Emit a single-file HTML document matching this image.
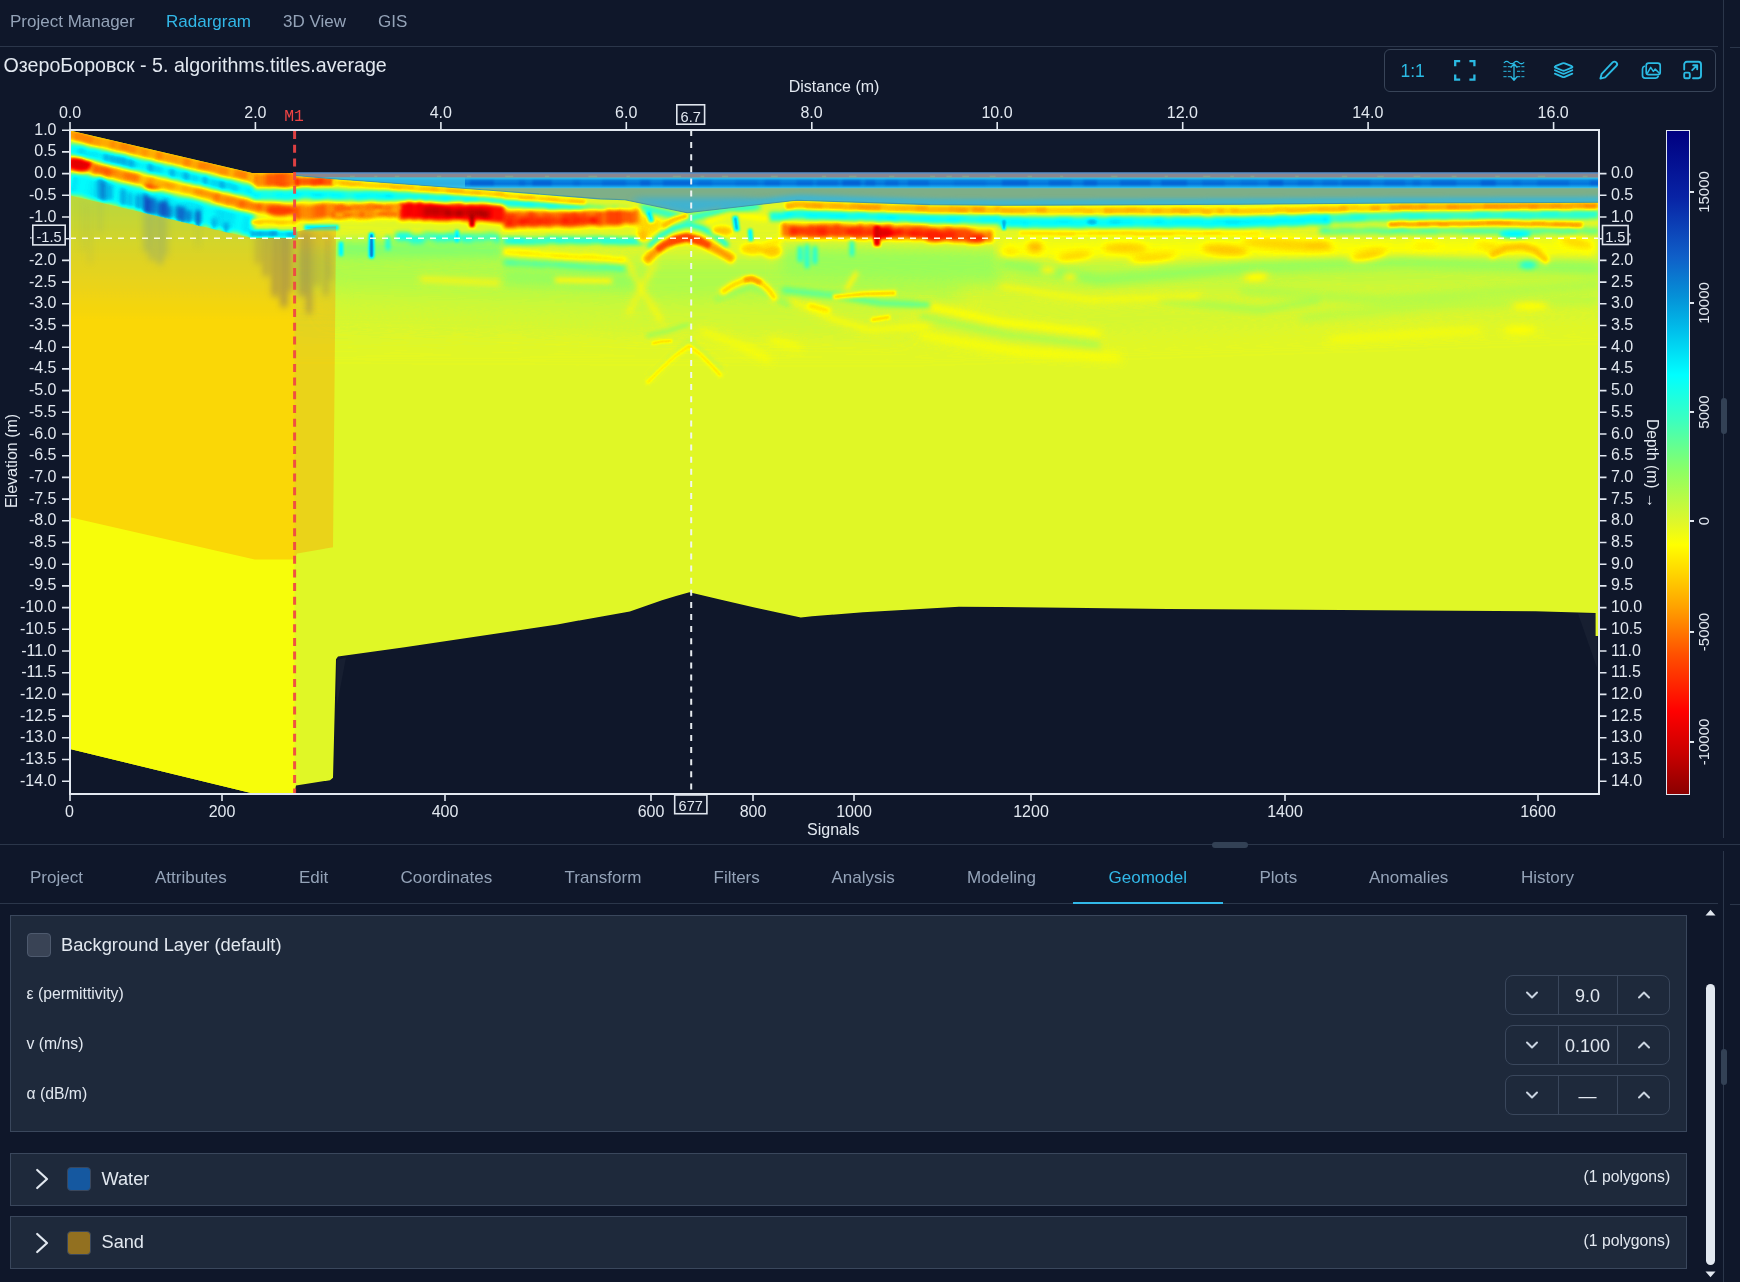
<!DOCTYPE html>
<html><head><meta charset="utf-8"><title>Radargram</title>
<style>
html,body{margin:0;padding:0;}
body{width:1740px;height:1282px;overflow:hidden;background:#0f172a;position:relative;
 font-family:"Liberation Sans",sans-serif;color:#e2e8f0;}
.a{position:absolute;white-space:nowrap;}
.t{position:absolute;white-space:nowrap;font-size:16px;line-height:16px;color:#e2e8f0;}
.nav{position:absolute;top:12px;font-size:17px;line-height:20px;color:#94a3b8;}
.tab{position:absolute;top:868px;font-size:17px;line-height:20px;color:#94a3b8;}
.hl{position:absolute;height:1px;background:#2b364a;}
.vl{position:absolute;width:1px;background:#2b364a;}
.card{position:absolute;left:10px;width:1675px;background:#1e293b;border:1px solid #3a475c;}
.lab{position:absolute;left:26.5px;font-size:15.75px;line-height:18px;color:#e2e8f0;}
.spin{position:absolute;left:1505px;width:163px;height:37.5px;border:1px solid #3a475c;border-radius:8px;}
.spin i{position:absolute;top:0;width:1px;height:37.5px;background:#3a475c;}
.spin b{position:absolute;left:52.5px;width:58px;top:9.5px;text-align:center;font-weight:normal;font-size:18px;line-height:20px;color:#e2e8f0;}
.spin svg{position:absolute;top:12px;}
.sw{position:absolute;left:67px;width:22px;height:22px;border-radius:4px;border:1px solid #3a475c;}
.poly{position:absolute;left:1583.5px;font-size:15.75px;line-height:18px;color:#e2e8f0;}
.nm{position:absolute;left:101.5px;font-size:18.2px;line-height:20px;color:#e2e8f0;}
</style></head><body><div id="w" style="position:absolute;left:0;top:0;width:1740px;height:1282px;will-change:transform">

<div class="nav" style="left:10px;">Project Manager</div>
<div class="nav" style="left:166px;color:#32b8e8;">Radargram</div>
<div class="nav" style="left:283px;">3D View</div>
<div class="nav" style="left:378px;">GIS</div>
<div class="hl" style="left:0;top:46px;width:1718px"></div>
<div class="hl" style="left:1730px;top:47px;width:10px"></div>
<div class="vl" style="left:1723px;top:0;height:838px"></div>
<div class="vl" style="left:1723px;top:851px;height:431px"></div>
<div class="a" style="left:1721px;top:397.5px;width:6.3px;height:36.5px;border-radius:3px;background:#334155"></div>
<div class="a" style="left:1721px;top:1048.7px;width:6.3px;height:36.5px;border-radius:3px;background:#334155"></div>
<div class="a" style="left:3.5px;top:53px;font-size:19.65px;line-height:24px;color:#e2e8f0">ОзероБоровск - 5. algorithms.titles.average</div>
<div class="a" style="left:1384px;top:49.3px;width:329.8px;height:41.2px;border:1px solid #384458;border-radius:6px"></div>
<div class="a" style="left:1400.5px;top:60.5px;font-size:17.5px;line-height:20px;color:#2bbbe4">1:1</div>
<svg class="a" style="left:1452.5px;top:59px" width="24" height="23" viewBox="0 0 24 23" fill="none" stroke="#2bbbe4" stroke-width="2" stroke-linecap="round" stroke-linejoin="round"><path d="M2.2 7.2V2.2H7.2 M16.4 2.2H21.4V7.2 M21.4 15.6V20.6H16.4 M7.2 20.6H2.2V15.6" stroke-width="2.3" stroke-linecap="butt" stroke-linejoin="miter"/></svg>
<svg class="a" style="left:1502px;top:58.5px" width="24" height="24" viewBox="0 0 24 24" fill="none" stroke="#2bbbe4" stroke-width="1.3" stroke-linecap="round" stroke-linejoin="round"><path d="M2.2 3.6c1.6-1.5 3.2-1.5 4.9 0s3.3 1.5 4.9 0 3.3-1.5 4.9 0 3.3 1.5 4.9 0" stroke-width="1.2"/><path d="M12 5.0V21 M9 8.2L12 4.8 15 8.2 M9 17.8L12 21.2 15 17.8" stroke-width="1.3"/><path d="M1.4 7.6H8.8 M1.4 12.4H8.8 M1.4 17.6H8.8 M15 7.6H22.4 M15 12.4H22.4 M15 17.6H22.4" stroke-width="1.1" stroke-dasharray="3.2 1.2" stroke-linecap="butt" opacity="0.8"/></svg>
<svg class="a" style="left:1552px;top:60px" width="24" height="21" viewBox="0 0 24 21" fill="none" stroke="#2bbbe4" stroke-width="1.8" stroke-linecap="round" stroke-linejoin="round"><path d="M10.4 3.3Q11.6 2.8 12.8 3.3L19.8 6.2Q21.2 6.9 19.8 7.6L12.8 10.5Q11.6 11 10.4 10.5L3.4 7.6Q2 6.9 3.4 6.2Z"/><path d="M2.9 10.2L10.4 13.5Q11.6 14 12.8 13.5L20.3 10.2"/><path d="M2.9 13.6L10.4 16.9Q11.6 17.4 12.8 16.9L20.3 13.6"/></svg>
<svg class="a" style="left:1597.5px;top:59px" width="22" height="22" viewBox="0 0 22 22" fill="none" stroke="#2bbbe4" stroke-width="1.9" stroke-linecap="round" stroke-linejoin="round"><path d="M14.6 3.4a2.55 2.55 0 0 1 3.7 3.6L7.2 18.3 2.4 19.6 3.7 14.8Z"/></svg>
<svg class="a" style="left:1639.5px;top:59.5px" width="22" height="22" viewBox="0 0 22 22" fill="none" stroke="#2bbbe4" stroke-width="1.7" stroke-linecap="round" stroke-linejoin="round"><rect x="6.2" y="3.1" width="14" height="11.6" rx="2.4"/><path d="M4.4 6.3C3.1 6.7 2.5 7.5 2.5 8.9v6.6a2.6 2.6 0 0 0 2.6 2.6h10.6c1.4 0 2.2-.6 2.5-1.8"/><path d="M7.4 13.2l3.3-5.8 2.6 4 1.9-2.3 4.2 4.2" stroke-width="1.5"/></svg>
<svg class="a" style="left:1681px;top:59px" width="22" height="22" viewBox="0 0 22 22" fill="none" stroke="#2bbbe4" stroke-width="1.9" stroke-linecap="round" stroke-linejoin="round"><path d="M3.2 10.6V5.4a2.6 2.6 0 0 1 2.6-2.6H17.4a2.6 2.6 0 0 1 2.6 2.6V16.6a2.6 2.6 0 0 1-2.6 2.6H12"/><rect x="3.2" y="13.6" width="5.6" height="5.6" rx="1.3"/><path d="M11.2 11.2L16.2 6.2 M12.2 6.2H16.2V10.2"/></svg>
<svg class="a" style="left:0;top:0" width="1740" height="840" viewBox="0 0 1740 840">
<defs>
<filter id="jet" filterUnits="userSpaceOnUse" x="60" y="120" width="1550" height="690" color-interpolation-filters="sRGB"><feComponentTransfer><feFuncR type="table" tableValues="0.545 0.592 0.639 0.686 0.733 0.780 0.819 0.858 0.898 0.937 0.976 1.000 1.000 1.000 1.000 1.000 1.000 1.000 1.000 1.000 1.000 1.000 1.000 1.000 1.000 1.000 1.000 1.000 1.000 1.000 1.000 1.000 0.998 0.955 0.911 0.867 0.817 0.768 0.718 0.668 0.618 0.569 0.520 0.471 0.423 0.374 0.325 0.277 0.229 0.189 0.149 0.109 0.069 0.029 0.000 0.000 0.000 0.000 0.000 0.000 0.002 0.007 0.012 0.016 0.022 0.029 0.037 0.045 0.052 0.058 0.055 0.051 0.048 0.044 0.040 0.037 0.033 0.030 0.026 0.022 0.018 0.015 0.011 0.007 0.004 0.000"/><feFuncG type="table" tableValues="0.000 0.000 0.000 0.000 0.000 0.000 0.000 0.000 0.000 0.000 0.000 0.016 0.060 0.103 0.147 0.190 0.233 0.277 0.322 0.374 0.426 0.478 0.531 0.583 0.635 0.683 0.729 0.775 0.821 0.867 0.912 0.957 1.000 0.989 0.978 0.969 0.974 0.979 0.984 0.989 0.993 0.998 1.000 1.000 1.000 1.000 1.000 1.000 1.000 1.000 1.000 1.000 1.000 1.000 0.988 0.944 0.899 0.855 0.811 0.767 0.724 0.683 0.641 0.600 0.559 0.521 0.482 0.444 0.405 0.368 0.337 0.306 0.276 0.245 0.214 0.183 0.153 0.129 0.113 0.097 0.081 0.065 0.048 0.032 0.016 0.000"/><feFuncB type="table" tableValues="0.000 0.000 0.000 0.000 0.000 0.000 0.000 0.000 0.000 0.000 0.000 0.000 0.000 0.000 0.000 0.000 0.000 0.000 0.000 0.000 0.000 0.000 0.000 0.000 0.000 0.000 0.000 0.000 0.000 0.000 0.000 0.000 0.002 0.059 0.116 0.170 0.205 0.239 0.274 0.309 0.344 0.378 0.425 0.480 0.534 0.589 0.644 0.698 0.751 0.795 0.838 0.882 0.925 0.969 0.996 0.983 0.969 0.955 0.942 0.928 0.912 0.894 0.875 0.857 0.840 0.829 0.817 0.806 0.794 0.782 0.764 0.746 0.728 0.710 0.692 0.674 0.656 0.639 0.621 0.604 0.587 0.570 0.553 0.536 0.519 0.502"/></feComponentTransfer></filter>
<filter id="bl1" filterUnits="userSpaceOnUse" x="40" y="100" width="1600" height="720" color-interpolation-filters="sRGB"><feGaussianBlur stdDeviation="1"/></filter>
<filter id="bl1_2" filterUnits="userSpaceOnUse" x="40" y="100" width="1600" height="720" color-interpolation-filters="sRGB"><feGaussianBlur stdDeviation="1.2"/></filter>
<filter id="bl1_3" filterUnits="userSpaceOnUse" x="40" y="100" width="1600" height="720" color-interpolation-filters="sRGB"><feGaussianBlur stdDeviation="1.3"/></filter>
<filter id="bl1_5" filterUnits="userSpaceOnUse" x="40" y="100" width="1600" height="720" color-interpolation-filters="sRGB"><feGaussianBlur stdDeviation="1.5"/></filter>
<filter id="bl1_6" filterUnits="userSpaceOnUse" x="40" y="100" width="1600" height="720" color-interpolation-filters="sRGB"><feGaussianBlur stdDeviation="1.6"/></filter>
<filter id="bl1_7" filterUnits="userSpaceOnUse" x="40" y="100" width="1600" height="720" color-interpolation-filters="sRGB"><feGaussianBlur stdDeviation="1.7"/></filter>
<filter id="bl1_8" filterUnits="userSpaceOnUse" x="40" y="100" width="1600" height="720" color-interpolation-filters="sRGB"><feGaussianBlur stdDeviation="1.8"/></filter>
<filter id="bl2" filterUnits="userSpaceOnUse" x="40" y="100" width="1600" height="720" color-interpolation-filters="sRGB"><feGaussianBlur stdDeviation="2"/></filter>
<filter id="bl2_2" filterUnits="userSpaceOnUse" x="40" y="100" width="1600" height="720" color-interpolation-filters="sRGB"><feGaussianBlur stdDeviation="2.2"/></filter>
<filter id="bl2_5" filterUnits="userSpaceOnUse" x="40" y="100" width="1600" height="720" color-interpolation-filters="sRGB"><feGaussianBlur stdDeviation="2.5"/></filter>
<filter id="bl3" filterUnits="userSpaceOnUse" x="40" y="100" width="1600" height="720" color-interpolation-filters="sRGB"><feGaussianBlur stdDeviation="3"/></filter>
<filter id="bl3_5" filterUnits="userSpaceOnUse" x="40" y="100" width="1600" height="720" color-interpolation-filters="sRGB"><feGaussianBlur stdDeviation="3.5"/></filter>
<filter id="bl4" filterUnits="userSpaceOnUse" x="40" y="100" width="1600" height="720" color-interpolation-filters="sRGB"><feGaussianBlur stdDeviation="4"/></filter>
<filter id="bl5" filterUnits="userSpaceOnUse" x="40" y="100" width="1600" height="720" color-interpolation-filters="sRGB"><feGaussianBlur stdDeviation="5"/></filter>
<filter id="bl7" filterUnits="userSpaceOnUse" x="40" y="100" width="1600" height="720" color-interpolation-filters="sRGB"><feGaussianBlur stdDeviation="7"/></filter>
<filter id="bl10" filterUnits="userSpaceOnUse" x="40" y="100" width="1600" height="720" color-interpolation-filters="sRGB"><feGaussianBlur stdDeviation="10"/></filter>
<filter id="bl12" filterUnits="userSpaceOnUse" x="40" y="100" width="1600" height="720" color-interpolation-filters="sRGB"><feGaussianBlur stdDeviation="12"/></filter>
<filter id="bl14" filterUnits="userSpaceOnUse" x="40" y="100" width="1600" height="720" color-interpolation-filters="sRGB"><feGaussianBlur stdDeviation="14"/></filter>
<clipPath id="dclip"><polygon points="70.0,130.5 252.0,173.0 1598.0,173.0 1598.0,636.0 1595.6,636.0 1595.6,613.0 1535.7,611.3 1168.0,609.0 1000.0,607.0 959.0,606.8 863.0,612.3 812.0,616.2 800.8,617.5 754.5,607.5 720.0,599.5 689.4,592.2 676.0,596.0 662.0,600.2 629.8,611.5 557.4,624.4 404.6,647.3 338.0,656.5 336.0,659.3 333.0,777.8 330.0,780.2 296.0,785.6 294.6,793.0 251.0,793.0 70.0,749.0"/></clipPath>
<clipPath id="wclip"><polygon points="296.0,173.0 1598.0,173.0 1598.0,202.3 1400.0,203.0 1240.0,204.2 1000.0,205.3 930.0,204.6 797.0,200.2 687.0,212.7 625.0,199.8 600.0,198.9 500.0,191.0 330.0,178.5 296.0,175.5"/></clipPath>
<clipPath id="sclip"><polygon points="70.0,195.5 252.0,238.0 294.6,238.0 294.6,232.0 315.0,227.8 336.0,226.0 333.0,547.2 297.0,553.4 294.7,559.6 254.8,559.6 70.0,517.2"/></clipPath>
<clipPath id="undersand"><polygon points="70,196 252,238.5 294.6,238.5 294.6,800 60,800"/></clipPath>
<linearGradient id="leftg" gradientUnits="userSpaceOnUse" x1="0" y1="205" x2="0" y2="320"><stop offset="0" stop-color="#797979"/><stop offset="0.5" stop-color="#6c6c6c"/><stop offset="1" stop-color="#626262"/></linearGradient>
<linearGradient id="wband" x1="0" y1="0" x2="0" y2="1"><stop offset="0" stop-color="#34c8ec"/><stop offset="0.28" stop-color="#0a86e0"/><stop offset="0.6" stop-color="#0472dc"/><stop offset="0.85" stop-color="#16a6ea"/><stop offset="1" stop-color="#46c8e6"/></linearGradient>
</defs>
<g filter="url(#jet)"><g clip-path="url(#dclip)">
<rect x="60" y="120" width="1550" height="690" fill="#686868"/>
<g filter="url(#bl14)"><ellipse cx="205.0" cy="640.0" rx="45.0" ry="80.0" fill="#5e5e5e" opacity="0.80"/></g>
<g filter="url(#bl12)"><polyline points="200.0,270.0 640.0,282.0 1000.0,272.0 1700.0,262.0" fill="none" stroke="#727272" stroke-width="38.0" stroke-linecap="butt" stroke-linejoin="round"/><polyline points="200.0,322.0 900.0,326.0 1700.0,300.0" fill="none" stroke="#6c6c6c" stroke-width="24.0" stroke-linecap="butt" stroke-linejoin="round"/></g>
<g filter="url(#bl10)"><polyline points="250.0,266.0 640.0,280.0 960.0,280.0" fill="none" stroke="#747474" stroke-width="36.0" stroke-linecap="butt" stroke-linejoin="round"/><polyline points="330.0,300.0 640.0,314.0 900.0,318.0" fill="none" stroke="#6d6d6d" stroke-width="22.0" stroke-linecap="butt" stroke-linejoin="round"/></g>
<g filter="url(#bl7)"><polyline points="782.0,262.0 1000.0,266.0" fill="none" stroke="#797979" stroke-width="30.0" stroke-linecap="butt" stroke-linejoin="round"/></g>
<g filter="url(#bl5)"><polyline points="1000.0,250.0 1598.0,248.0" fill="none" stroke="#616161" stroke-width="18.0" stroke-linecap="butt" stroke-linejoin="round"/><polyline points="336.0,249.0 504.0,250.0" fill="none" stroke="#7e7e7e" stroke-width="18.0" stroke-linecap="butt" stroke-linejoin="round"/><polyline points="504.0,276.0 640.0,282.0" fill="none" stroke="#7a7a7a" stroke-width="14.0" stroke-linecap="butt" stroke-linejoin="round"/></g>
<g filter="url(#bl4)"><polyline points="1000.0,262.0 1100.0,280.0 1240.0,268.0 1400.0,262.0 1598.0,268.0" fill="none" stroke="#7e7e7e" stroke-width="8.0" stroke-linecap="butt" stroke-linejoin="round"/><polyline points="1240.0,290.0 1380.0,300.0 1598.0,285.0" fill="none" stroke="#767676" stroke-width="7.0" stroke-linecap="butt" stroke-linejoin="round"/><polyline points="1300.0,318.0 1440.0,305.0 1598.0,300.0" fill="none" stroke="#747474" stroke-width="6.0" stroke-linecap="butt" stroke-linejoin="round"/></g>
<g filter="url(#bl3_5)"><polyline points="700.0,330.0 740.0,345.0 770.0,360.0" fill="none" stroke="#606060" stroke-width="5.0" stroke-linecap="butt" stroke-linejoin="round"/><polyline points="770.0,340.0 800.0,347.0" fill="none" stroke="#606060" stroke-width="5.0" stroke-linecap="butt" stroke-linejoin="round"/><polyline points="920.0,316.0 1010.0,335.0 1100.0,345.0" fill="none" stroke="#787878" stroke-width="6.0" stroke-linecap="butt" stroke-linejoin="round"/><polyline points="920.0,335.0 1020.0,352.0 1120.0,358.0" fill="none" stroke="#606060" stroke-width="6.0" stroke-linecap="butt" stroke-linejoin="round"/><polyline points="1160.0,300.0 1260.0,310.0 1320.0,300.0" fill="none" stroke="#7a7a7a" stroke-width="5.0" stroke-linecap="butt" stroke-linejoin="round"/><polyline points="1330.0,340.0 1480.0,330.0" fill="none" stroke="#616161" stroke-width="5.0" stroke-linecap="butt" stroke-linejoin="round"/></g>
<g filter="url(#bl3)"><polyline points="420.0,279.0 500.0,283.0" fill="none" stroke="#5f5f5f" stroke-width="5.0" stroke-linecap="butt" stroke-linejoin="round"/><ellipse cx="649.0" cy="225.0" rx="13.0" ry="10.0" fill="#565656"/><polyline points="626.0,258.0 640.0,287.0 662.0,322.0" fill="none" stroke="#5f5f5f" stroke-width="4.0" stroke-linecap="butt" stroke-linejoin="round"/><polyline points="656.0,262.0 640.0,290.0 628.0,315.0" fill="none" stroke="#606060" stroke-width="4.0" stroke-linecap="butt" stroke-linejoin="round"/><polyline points="790.0,300.0 830.0,318.0 870.0,330.0 930.0,326.0" fill="none" stroke="#606060" stroke-width="5.0" stroke-linecap="butt" stroke-linejoin="round"/><ellipse cx="1035.0" cy="247.0" rx="8.0" ry="5.5" fill="#4d4d4d"/><ellipse cx="1074.0" cy="256.0" rx="18.0" ry="4.5" fill="#555555" transform="rotate(-8 1074.0 256.0)"/><ellipse cx="1125.0" cy="248.0" rx="22.0" ry="5.0" fill="#535353"/><ellipse cx="1153.0" cy="257.5" rx="24.0" ry="4.5" fill="#555555" transform="rotate(-6 1153.0 257.5)"/><ellipse cx="1225.0" cy="250.0" rx="23.0" ry="5.5" fill="#515151" transform="rotate(5 1225.0 250.0)"/><ellipse cx="1010.0" cy="252.0" rx="9.0" ry="3.5" fill="#595959"/><ellipse cx="1048.0" cy="270.0" rx="8.0" ry="3.5" fill="#5d5d5d"/><ellipse cx="1070.0" cy="277.0" rx="7.0" ry="3.5" fill="#5f5f5f"/><ellipse cx="1262.0" cy="243.0" rx="15.0" ry="4.5" fill="#595959"/><ellipse cx="1287.0" cy="244.5" rx="47.0" ry="6.0" fill="#555555" transform="rotate(4 1287.0 244.5)"/><ellipse cx="1318.0" cy="245.0" rx="13.0" ry="4.5" fill="#515151"/><ellipse cx="1368.0" cy="255.0" rx="19.0" ry="5.0" fill="#535353" transform="rotate(-12 1368.0 255.0)"/><ellipse cx="1425.0" cy="245.0" rx="13.0" ry="3.5" fill="#5b5b5b"/><ellipse cx="1488.0" cy="246.0" rx="13.0" ry="3.5" fill="#575757" transform="rotate(10 1488.0 246.0)"/><ellipse cx="1576.0" cy="242.5" rx="17.0" ry="4.5" fill="#555555" transform="rotate(12 1576.0 242.5)"/><ellipse cx="1256.0" cy="277.0" rx="13.0" ry="3.5" fill="#5b5b5b" transform="rotate(-5 1256.0 277.0)"/><ellipse cx="1530.0" cy="306.0" rx="19.0" ry="3.5" fill="#5d5d5d"/><ellipse cx="1520.0" cy="330.0" rx="17.0" ry="4.0" fill="#606060"/><polyline points="1000.0,286.0 1090.0,300.0 1200.0,296.0" fill="none" stroke="#616161" stroke-width="5.0" stroke-linecap="butt" stroke-linejoin="round"/><polyline points="920.0,304.0 1000.0,322.0 1100.0,333.0" fill="none" stroke="#5f5f5f" stroke-width="6.0" stroke-linecap="butt" stroke-linejoin="round"/></g>
<g filter="url(#bl2_5)"><ellipse cx="284.0" cy="181.0" rx="9.0" ry="5.5" fill="#2a2a2a"/><ellipse cx="80.0" cy="163.5" rx="13.0" ry="9.5" fill="#181818"/><polyline points="68.4,182.7 78.3,184.7" fill="none" stroke="#a8a8a8" stroke-width="23.0" stroke-linecap="butt" stroke-linejoin="round"/><polyline points="77.1,184.1 87.6,186.3" fill="none" stroke="#a2a2a2" stroke-width="23.0" stroke-linecap="butt" stroke-linejoin="round"/><polyline points="86.4,186.8 94.1,188.3" fill="none" stroke="#a4a4a4" stroke-width="23.0" stroke-linecap="butt" stroke-linejoin="round"/><polyline points="92.9,188.4 100.8,190.0" fill="none" stroke="#aaaaaa" stroke-width="23.0" stroke-linecap="butt" stroke-linejoin="round"/><polyline points="99.6,189.2 109.1,191.2" fill="none" stroke="#a4a4a4" stroke-width="23.0" stroke-linecap="butt" stroke-linejoin="round"/><polyline points="107.9,191.4 116.3,193.1" fill="none" stroke="#a4a4a4" stroke-width="23.0" stroke-linecap="butt" stroke-linejoin="round"/><polyline points="115.1,193.2 130.1,196.5" fill="none" stroke="#a3a3a3" stroke-width="23.0" stroke-linecap="butt" stroke-linejoin="round"/><polyline points="128.9,196.2 138.6,198.2" fill="none" stroke="#a1a1a1" stroke-width="23.0" stroke-linecap="butt" stroke-linejoin="round"/><polyline points="137.4,198.4 148.4,200.7" fill="none" stroke="#a3a3a3" stroke-width="23.0" stroke-linecap="butt" stroke-linejoin="round"/><polyline points="147.2,200.4 154.4,201.8" fill="none" stroke="#a2a2a2" stroke-width="23.0" stroke-linecap="butt" stroke-linejoin="round"/><polyline points="153.2,201.5 160.8,203.0" fill="none" stroke="#a4a4a4" stroke-width="23.0" stroke-linecap="butt" stroke-linejoin="round"/><polyline points="159.6,203.6 171.4,206.1" fill="none" stroke="#a9a9a9" stroke-width="23.0" stroke-linecap="butt" stroke-linejoin="round"/><polyline points="170.2,206.5 183.2,209.2" fill="none" stroke="#a5a5a5" stroke-width="23.0" stroke-linecap="butt" stroke-linejoin="round"/><polyline points="182.0,208.4 197.1,211.6" fill="none" stroke="#a8a8a8" stroke-width="23.0" stroke-linecap="butt" stroke-linejoin="round"/><polyline points="195.9,212.4 203.4,213.9" fill="none" stroke="#aaaaaa" stroke-width="23.0" stroke-linecap="butt" stroke-linejoin="round"/><polyline points="202.2,213.9 215.3,216.7" fill="none" stroke="#a2a2a2" stroke-width="23.0" stroke-linecap="butt" stroke-linejoin="round"/><polyline points="214.1,216.7 225.3,219.0" fill="none" stroke="#a9a9a9" stroke-width="23.0" stroke-linecap="butt" stroke-linejoin="round"/><polyline points="224.1,219.1 236.0,221.6" fill="none" stroke="#a8a8a8" stroke-width="23.0" stroke-linecap="butt" stroke-linejoin="round"/><polyline points="234.8,220.6 243.8,222.4" fill="none" stroke="#a2a2a2" stroke-width="23.0" stroke-linecap="butt" stroke-linejoin="round"/><polyline points="242.6,223.4 250.7,225.0" fill="none" stroke="#a7a7a7" stroke-width="23.0" stroke-linecap="butt" stroke-linejoin="round"/><polyline points="249.5,224.8 253.6,225.2" fill="none" stroke="#a6a6a6" stroke-width="23.0" stroke-linecap="butt" stroke-linejoin="round"/><ellipse cx="350.0" cy="207.5" rx="5.0" ry="2.6" fill="#585858"/><ellipse cx="366.0" cy="215.0" rx="7.0" ry="2.6" fill="#585858"/><ellipse cx="383.0" cy="208.0" rx="4.0" ry="2.6" fill="#585858"/><ellipse cx="392.0" cy="214.0" rx="5.0" ry="2.6" fill="#585858"/><ellipse cx="340.0" cy="214.0" rx="4.0" ry="2.6" fill="#585858"/><polyline points="395.4,236.6 410.9,236.6" fill="none" stroke="#9c9c9c" stroke-width="9.0" stroke-linecap="butt" stroke-linejoin="round"/><polyline points="409.7,239.5 424.3,239.5" fill="none" stroke="#989898" stroke-width="9.0" stroke-linecap="butt" stroke-linejoin="round"/><polyline points="423.1,236.5 434.5,236.5" fill="none" stroke="#8d8d8d" stroke-width="9.0" stroke-linecap="butt" stroke-linejoin="round"/><polyline points="433.3,237.8 447.6,237.8" fill="none" stroke="#969696" stroke-width="9.0" stroke-linecap="butt" stroke-linejoin="round"/><polyline points="446.4,237.2 456.1,237.2" fill="none" stroke="#999999" stroke-width="9.0" stroke-linecap="butt" stroke-linejoin="round"/><polyline points="454.9,237.6 463.3,237.6" fill="none" stroke="#8e8e8e" stroke-width="9.0" stroke-linecap="butt" stroke-linejoin="round"/><polyline points="462.1,238.3 472.6,238.3" fill="none" stroke="#989898" stroke-width="9.0" stroke-linecap="butt" stroke-linejoin="round"/><polyline points="471.4,237.9 485.8,237.9" fill="none" stroke="#8f8f8f" stroke-width="9.0" stroke-linecap="butt" stroke-linejoin="round"/><polyline points="484.6,236.9 495.4,236.9" fill="none" stroke="#8e8e8e" stroke-width="9.0" stroke-linecap="butt" stroke-linejoin="round"/><polyline points="494.2,238.8 500.6,238.8" fill="none" stroke="#949494" stroke-width="9.0" stroke-linecap="butt" stroke-linejoin="round"/><polyline points="503.4,262.2 517.6,263.0" fill="none" stroke="#8b8b8b" stroke-width="7.0" stroke-linecap="butt" stroke-linejoin="round"/><polyline points="516.4,263.0 532.4,263.8" fill="none" stroke="#888888" stroke-width="7.0" stroke-linecap="butt" stroke-linejoin="round"/><polyline points="531.2,263.8 544.7,264.4" fill="none" stroke="#8a8a8a" stroke-width="7.0" stroke-linecap="butt" stroke-linejoin="round"/><polyline points="543.5,264.1 557.2,264.8" fill="none" stroke="#888888" stroke-width="7.0" stroke-linecap="butt" stroke-linejoin="round"/><polyline points="556.0,264.6 569.2,265.3" fill="none" stroke="#8a8a8a" stroke-width="7.0" stroke-linecap="butt" stroke-linejoin="round"/><polyline points="568.0,265.6 581.1,266.3" fill="none" stroke="#8a8a8a" stroke-width="7.0" stroke-linecap="butt" stroke-linejoin="round"/><polyline points="579.9,266.6 588.3,267.0" fill="none" stroke="#8a8a8a" stroke-width="7.0" stroke-linecap="butt" stroke-linejoin="round"/><polyline points="587.1,267.0 601.9,267.7" fill="none" stroke="#898989" stroke-width="7.0" stroke-linecap="butt" stroke-linejoin="round"/><polyline points="600.7,267.1 618.4,268.0" fill="none" stroke="#8b8b8b" stroke-width="7.0" stroke-linecap="butt" stroke-linejoin="round"/><polyline points="617.2,268.5 625.6,268.6" fill="none" stroke="#8b8b8b" stroke-width="7.0" stroke-linecap="butt" stroke-linejoin="round"/><polyline points="555.0,280.0 612.0,281.0" fill="none" stroke="#5d5d5d" stroke-width="5.0" stroke-linecap="butt" stroke-linejoin="round"/><polyline points="640.0,207.0 665.0,213.0 687.0,219.0 712.0,213.0 760.0,206.0" fill="none" stroke="#969696" stroke-width="7.0" stroke-linecap="butt" stroke-linejoin="round"/><ellipse cx="753.0" cy="249.0" rx="13.0" ry="6.0" fill="#545454"/><ellipse cx="772.0" cy="251.0" rx="10.0" ry="7.0" fill="#525252"/><polyline points="715.0,300.0 752.0,286.0 790.0,306.0" fill="none" stroke="#808080" stroke-width="4.0" stroke-linecap="butt" stroke-linejoin="round" opacity="0.80"/><polyline points="650.0,378.0 689.0,340.0 722.0,370.0" fill="none" stroke="#787878" stroke-width="3.0" stroke-linecap="butt" stroke-linejoin="round" opacity="0.70"/><polyline points="782.0,290.0 840.0,296.0 880.0,303.0 930.0,305.0" fill="none" stroke="#8a8a8a" stroke-width="6.0" stroke-linecap="butt" stroke-linejoin="round"/><polyline points="857.0,272.0 846.0,290.0" fill="none" stroke="#5c5c5c" stroke-width="4.0" stroke-linecap="butt" stroke-linejoin="round"/><polyline points="1319.4,230.7 1330.3,230.7" fill="none" stroke="#919191" stroke-width="6.0" stroke-linecap="butt" stroke-linejoin="round"/><polyline points="1329.1,231.4 1339.9,231.4" fill="none" stroke="#898989" stroke-width="6.0" stroke-linecap="butt" stroke-linejoin="round"/><polyline points="1338.7,230.8 1354.3,230.8" fill="none" stroke="#8c8c8c" stroke-width="6.0" stroke-linecap="butt" stroke-linejoin="round"/><polyline points="1353.1,231.1 1365.2,231.1" fill="none" stroke="#878787" stroke-width="6.0" stroke-linecap="butt" stroke-linejoin="round"/><polyline points="1364.0,230.6 1380.2,230.6" fill="none" stroke="#8b8b8b" stroke-width="6.0" stroke-linecap="butt" stroke-linejoin="round"/><polyline points="1379.0,231.4 1393.5,231.4" fill="none" stroke="#8d8d8d" stroke-width="6.0" stroke-linecap="butt" stroke-linejoin="round"/><polyline points="1392.3,230.6 1410.4,230.6" fill="none" stroke="#929292" stroke-width="6.0" stroke-linecap="butt" stroke-linejoin="round"/><polyline points="1409.2,231.3 1420.0,231.3" fill="none" stroke="#8b8b8b" stroke-width="6.0" stroke-linecap="butt" stroke-linejoin="round"/><polyline points="1418.8,231.1 1439.1,231.1" fill="none" stroke="#8f8f8f" stroke-width="6.0" stroke-linecap="butt" stroke-linejoin="round"/><polyline points="1437.9,230.6 1456.2,230.6" fill="none" stroke="#898989" stroke-width="6.0" stroke-linecap="butt" stroke-linejoin="round"/><polyline points="1455.0,231.1 1464.8,231.1" fill="none" stroke="#898989" stroke-width="6.0" stroke-linecap="butt" stroke-linejoin="round"/><polyline points="1463.6,230.9 1481.1,230.9" fill="none" stroke="#919191" stroke-width="6.0" stroke-linecap="butt" stroke-linejoin="round"/><polyline points="1479.9,231.1 1499.3,231.1" fill="none" stroke="#919191" stroke-width="6.0" stroke-linecap="butt" stroke-linejoin="round"/><polyline points="1498.1,231.2 1509.5,231.2" fill="none" stroke="#8a8a8a" stroke-width="6.0" stroke-linecap="butt" stroke-linejoin="round"/><polyline points="1508.3,231.3 1525.6,231.3" fill="none" stroke="#878787" stroke-width="6.0" stroke-linecap="butt" stroke-linejoin="round"/><polyline points="1524.4,231.4 1542.2,231.4" fill="none" stroke="#8f8f8f" stroke-width="6.0" stroke-linecap="butt" stroke-linejoin="round"/><polyline points="1541.0,230.6 1557.4,230.6" fill="none" stroke="#8d8d8d" stroke-width="6.0" stroke-linecap="butt" stroke-linejoin="round"/><polyline points="1556.2,231.4 1567.0,231.4" fill="none" stroke="#8e8e8e" stroke-width="6.0" stroke-linecap="butt" stroke-linejoin="round"/><polyline points="1565.8,230.9 1577.6,230.9" fill="none" stroke="#909090" stroke-width="6.0" stroke-linecap="butt" stroke-linejoin="round"/><polyline points="1576.4,230.5 1587.3,230.5" fill="none" stroke="#878787" stroke-width="6.0" stroke-linecap="butt" stroke-linejoin="round"/><polyline points="1586.1,231.1 1597.8,231.1" fill="none" stroke="#898989" stroke-width="6.0" stroke-linecap="butt" stroke-linejoin="round"/><polyline points="1596.6,230.6 1598.6,230.6" fill="none" stroke="#919191" stroke-width="6.0" stroke-linecap="butt" stroke-linejoin="round"/><ellipse cx="1528.0" cy="265.0" rx="9.0" ry="4.0" fill="#969696"/></g>
<g filter="url(#bl2_2)"><polyline points="503.4,240.6 512.8,240.6" fill="none" stroke="#989898" stroke-width="8.0" stroke-linecap="butt" stroke-linejoin="round"/><polyline points="511.6,240.7 524.9,240.7" fill="none" stroke="#9c9c9c" stroke-width="8.0" stroke-linecap="butt" stroke-linejoin="round"/><polyline points="523.7,241.2 536.0,241.2" fill="none" stroke="#959595" stroke-width="8.0" stroke-linecap="butt" stroke-linejoin="round"/><polyline points="534.8,240.9 547.0,240.9" fill="none" stroke="#939393" stroke-width="8.0" stroke-linecap="butt" stroke-linejoin="round"/><polyline points="545.8,239.8 557.6,239.8" fill="none" stroke="#959595" stroke-width="8.0" stroke-linecap="butt" stroke-linejoin="round"/><polyline points="556.4,240.4 564.9,240.4" fill="none" stroke="#979797" stroke-width="8.0" stroke-linecap="butt" stroke-linejoin="round"/><polyline points="563.7,240.1 575.5,240.1" fill="none" stroke="#959595" stroke-width="8.0" stroke-linecap="butt" stroke-linejoin="round"/><polyline points="574.3,240.5 591.7,240.5" fill="none" stroke="#959595" stroke-width="8.0" stroke-linecap="butt" stroke-linejoin="round"/><polyline points="590.5,240.0 602.7,240.0" fill="none" stroke="#949494" stroke-width="8.0" stroke-linecap="butt" stroke-linejoin="round"/><polyline points="601.5,240.7 617.7,240.7" fill="none" stroke="#989898" stroke-width="8.0" stroke-linecap="butt" stroke-linejoin="round"/><polyline points="616.5,241.2 627.0,241.2" fill="none" stroke="#969696" stroke-width="8.0" stroke-linecap="butt" stroke-linejoin="round"/><polyline points="625.8,241.0 642.1,241.0" fill="none" stroke="#989898" stroke-width="8.0" stroke-linecap="butt" stroke-linejoin="round"/><polyline points="640.9,239.9 645.6,239.9" fill="none" stroke="#9c9c9c" stroke-width="8.0" stroke-linecap="butt" stroke-linejoin="round"/><polyline points="769.4,216.8 778.5,215.9" fill="none" stroke="#9b9b9b" stroke-width="9.0" stroke-linecap="butt" stroke-linejoin="round"/><polyline points="777.3,216.8 786.2,216.0" fill="none" stroke="#9c9c9c" stroke-width="9.0" stroke-linecap="butt" stroke-linejoin="round"/><polyline points="785.0,215.0 793.9,214.1" fill="none" stroke="#a2a2a2" stroke-width="9.0" stroke-linecap="butt" stroke-linejoin="round"/><polyline points="792.7,214.3 807.0,214.2" fill="none" stroke="#9c9c9c" stroke-width="9.0" stroke-linecap="butt" stroke-linejoin="round"/><polyline points="805.8,214.9 819.9,215.3" fill="none" stroke="#a2a2a2" stroke-width="9.0" stroke-linecap="butt" stroke-linejoin="round"/><polyline points="818.7,215.1 832.0,215.5" fill="none" stroke="#a0a0a0" stroke-width="9.0" stroke-linecap="butt" stroke-linejoin="round"/><polyline points="830.8,215.8 840.8,216.1" fill="none" stroke="#a2a2a2" stroke-width="9.0" stroke-linecap="butt" stroke-linejoin="round"/><polyline points="839.6,215.8 847.6,216.0" fill="none" stroke="#a3a3a3" stroke-width="9.0" stroke-linecap="butt" stroke-linejoin="round"/><polyline points="846.4,216.1 856.9,216.4" fill="none" stroke="#9d9d9d" stroke-width="9.0" stroke-linecap="butt" stroke-linejoin="round"/><polyline points="855.7,215.7 867.8,216.1" fill="none" stroke="#9f9f9f" stroke-width="9.0" stroke-linecap="butt" stroke-linejoin="round"/><polyline points="866.6,216.7 878.3,217.0" fill="none" stroke="#9c9c9c" stroke-width="9.0" stroke-linecap="butt" stroke-linejoin="round"/><polyline points="877.1,217.0 888.0,217.3" fill="none" stroke="#a1a1a1" stroke-width="9.0" stroke-linecap="butt" stroke-linejoin="round"/><polyline points="886.8,217.5 898.0,217.8" fill="none" stroke="#a4a4a4" stroke-width="9.0" stroke-linecap="butt" stroke-linejoin="round"/><polyline points="896.8,217.3 909.6,217.7" fill="none" stroke="#9c9c9c" stroke-width="9.0" stroke-linecap="butt" stroke-linejoin="round"/><polyline points="908.4,218.2 922.4,218.7" fill="none" stroke="#9e9e9e" stroke-width="9.0" stroke-linecap="butt" stroke-linejoin="round"/><polyline points="921.2,218.7 937.6,219.0" fill="none" stroke="#a1a1a1" stroke-width="9.0" stroke-linecap="butt" stroke-linejoin="round"/><polyline points="936.4,219.1 948.0,219.2" fill="none" stroke="#9f9f9f" stroke-width="9.0" stroke-linecap="butt" stroke-linejoin="round"/><polyline points="946.8,219.2 959.9,219.3" fill="none" stroke="#a3a3a3" stroke-width="9.0" stroke-linecap="butt" stroke-linejoin="round"/><polyline points="958.7,218.7 966.5,218.7" fill="none" stroke="#9f9f9f" stroke-width="9.0" stroke-linecap="butt" stroke-linejoin="round"/><polyline points="965.3,219.3 980.3,219.5" fill="none" stroke="#9b9b9b" stroke-width="9.0" stroke-linecap="butt" stroke-linejoin="round"/><polyline points="979.1,219.5 994.0,219.6" fill="none" stroke="#a1a1a1" stroke-width="9.0" stroke-linecap="butt" stroke-linejoin="round"/><polyline points="992.8,219.5 1000.6,219.6" fill="none" stroke="#a2a2a2" stroke-width="9.0" stroke-linecap="butt" stroke-linejoin="round"/><polyline points="999.4,221.8 1009.4,221.8" fill="none" stroke="#9f9f9f" stroke-width="11.0" stroke-linecap="butt" stroke-linejoin="round"/><polyline points="1008.2,221.9 1022.2,221.9" fill="none" stroke="#a2a2a2" stroke-width="11.0" stroke-linecap="butt" stroke-linejoin="round"/><polyline points="1021.0,222.4 1029.9,222.5" fill="none" stroke="#a4a4a4" stroke-width="11.0" stroke-linecap="butt" stroke-linejoin="round"/><polyline points="1028.7,222.2 1041.4,222.2" fill="none" stroke="#a0a0a0" stroke-width="11.0" stroke-linecap="butt" stroke-linejoin="round"/><polyline points="1040.2,222.4 1057.5,222.5" fill="none" stroke="#a1a1a1" stroke-width="11.0" stroke-linecap="butt" stroke-linejoin="round"/><polyline points="1056.3,221.9 1072.5,222.0" fill="none" stroke="#a4a4a4" stroke-width="11.0" stroke-linecap="butt" stroke-linejoin="round"/><polyline points="1071.3,222.6 1084.5,222.6" fill="none" stroke="#a0a0a0" stroke-width="11.0" stroke-linecap="butt" stroke-linejoin="round"/><polyline points="1083.3,221.9 1098.6,221.9" fill="none" stroke="#a1a1a1" stroke-width="11.0" stroke-linecap="butt" stroke-linejoin="round"/><polyline points="1097.4,222.5 1110.4,222.5" fill="none" stroke="#a0a0a0" stroke-width="11.0" stroke-linecap="butt" stroke-linejoin="round"/><polyline points="1109.2,221.9 1121.1,221.9" fill="none" stroke="#a8a8a8" stroke-width="11.0" stroke-linecap="butt" stroke-linejoin="round"/><polyline points="1119.9,221.9 1133.7,221.9" fill="none" stroke="#a3a3a3" stroke-width="11.0" stroke-linecap="butt" stroke-linejoin="round"/><polyline points="1132.5,221.8 1144.7,221.9" fill="none" stroke="#9f9f9f" stroke-width="11.0" stroke-linecap="butt" stroke-linejoin="round"/><polyline points="1143.5,222.0 1155.3,222.1" fill="none" stroke="#a0a0a0" stroke-width="11.0" stroke-linecap="butt" stroke-linejoin="round"/><polyline points="1154.1,221.9 1164.8,221.9" fill="none" stroke="#a5a5a5" stroke-width="11.0" stroke-linecap="butt" stroke-linejoin="round"/><polyline points="1163.6,222.5 1173.5,222.6" fill="none" stroke="#9f9f9f" stroke-width="11.0" stroke-linecap="butt" stroke-linejoin="round"/><polyline points="1172.3,222.0 1188.7,222.0" fill="none" stroke="#a2a2a2" stroke-width="11.0" stroke-linecap="butt" stroke-linejoin="round"/><polyline points="1187.5,222.1 1203.6,222.1" fill="none" stroke="#a2a2a2" stroke-width="11.0" stroke-linecap="butt" stroke-linejoin="round"/><polyline points="1202.4,222.9 1214.4,222.9" fill="none" stroke="#a0a0a0" stroke-width="11.0" stroke-linecap="butt" stroke-linejoin="round"/><polyline points="1213.2,222.2 1226.5,222.2" fill="none" stroke="#a3a3a3" stroke-width="11.0" stroke-linecap="butt" stroke-linejoin="round"/><polyline points="1225.3,222.2 1240.5,222.3" fill="none" stroke="#a7a7a7" stroke-width="11.0" stroke-linecap="butt" stroke-linejoin="round"/><polyline points="1239.3,222.2 1251.2,221.8" fill="none" stroke="#a4a4a4" stroke-width="11.0" stroke-linecap="butt" stroke-linejoin="round"/><polyline points="1250.0,221.7 1266.8,221.1" fill="none" stroke="#a3a3a3" stroke-width="11.0" stroke-linecap="butt" stroke-linejoin="round"/><polyline points="1265.6,221.7 1276.6,221.3" fill="none" stroke="#a2a2a2" stroke-width="11.0" stroke-linecap="butt" stroke-linejoin="round"/><polyline points="1275.4,220.8 1289.2,220.3" fill="none" stroke="#a2a2a2" stroke-width="11.0" stroke-linecap="butt" stroke-linejoin="round"/><polyline points="1288.0,220.9 1298.1,220.5" fill="none" stroke="#a1a1a1" stroke-width="11.0" stroke-linecap="butt" stroke-linejoin="round"/><polyline points="1296.9,220.2 1306.4,219.9" fill="none" stroke="#a2a2a2" stroke-width="11.0" stroke-linecap="butt" stroke-linejoin="round"/><polyline points="1305.2,219.4 1316.4,219.0" fill="none" stroke="#a1a1a1" stroke-width="11.0" stroke-linecap="butt" stroke-linejoin="round"/><polyline points="1315.2,219.6 1324.8,219.3" fill="none" stroke="#a1a1a1" stroke-width="11.0" stroke-linecap="butt" stroke-linejoin="round"/><polyline points="1323.6,219.4 1330.6,219.1" fill="none" stroke="#a7a7a7" stroke-width="11.0" stroke-linecap="butt" stroke-linejoin="round"/><polyline points="1329.4,218.6 1339.1,218.3" fill="none" stroke="#919191" stroke-width="9.0" stroke-linecap="butt" stroke-linejoin="round"/><polyline points="1337.9,218.4 1352.6,217.8" fill="none" stroke="#959595" stroke-width="9.0" stroke-linecap="butt" stroke-linejoin="round"/><polyline points="1351.4,217.7 1366.6,217.1" fill="none" stroke="#999999" stroke-width="9.0" stroke-linecap="butt" stroke-linejoin="round"/><polyline points="1365.4,217.1 1379.8,216.5" fill="none" stroke="#929292" stroke-width="9.0" stroke-linecap="butt" stroke-linejoin="round"/><polyline points="1378.6,217.1 1394.0,216.5" fill="none" stroke="#919191" stroke-width="9.0" stroke-linecap="butt" stroke-linejoin="round"/><polyline points="1392.8,216.0 1402.8,215.7" fill="none" stroke="#949494" stroke-width="9.0" stroke-linecap="butt" stroke-linejoin="round"/><polyline points="1401.6,215.8 1410.4,215.7" fill="none" stroke="#979797" stroke-width="9.0" stroke-linecap="butt" stroke-linejoin="round"/><polyline points="1409.2,216.0 1425.6,215.9" fill="none" stroke="#989898" stroke-width="9.0" stroke-linecap="butt" stroke-linejoin="round"/><polyline points="1424.4,216.0 1437.0,215.9" fill="none" stroke="#949494" stroke-width="9.0" stroke-linecap="butt" stroke-linejoin="round"/><polyline points="1435.8,216.0 1452.2,215.9" fill="none" stroke="#949494" stroke-width="9.0" stroke-linecap="butt" stroke-linejoin="round"/><polyline points="1451.0,215.7 1467.6,215.6" fill="none" stroke="#919191" stroke-width="9.0" stroke-linecap="butt" stroke-linejoin="round"/><polyline points="1466.4,215.8 1475.9,215.7" fill="none" stroke="#939393" stroke-width="9.0" stroke-linecap="butt" stroke-linejoin="round"/><polyline points="1474.7,215.0 1490.3,214.9" fill="none" stroke="#989898" stroke-width="9.0" stroke-linecap="butt" stroke-linejoin="round"/><polyline points="1489.1,215.6 1504.7,215.5" fill="none" stroke="#949494" stroke-width="9.0" stroke-linecap="butt" stroke-linejoin="round"/><polyline points="1503.5,215.1 1520.9,215.0" fill="none" stroke="#9a9a9a" stroke-width="9.0" stroke-linecap="butt" stroke-linejoin="round"/><polyline points="1519.7,215.4 1535.2,215.3" fill="none" stroke="#979797" stroke-width="9.0" stroke-linecap="butt" stroke-linejoin="round"/><polyline points="1534.0,215.2 1542.9,215.1" fill="none" stroke="#959595" stroke-width="9.0" stroke-linecap="butt" stroke-linejoin="round"/><polyline points="1541.7,214.5 1559.1,214.4" fill="none" stroke="#999999" stroke-width="9.0" stroke-linecap="butt" stroke-linejoin="round"/><polyline points="1557.9,215.1 1573.0,215.0" fill="none" stroke="#949494" stroke-width="9.0" stroke-linecap="butt" stroke-linejoin="round"/><polyline points="1571.8,214.8 1589.5,214.7" fill="none" stroke="#969696" stroke-width="9.0" stroke-linecap="butt" stroke-linejoin="round"/><polyline points="1588.3,214.4 1597.3,214.4" fill="none" stroke="#959595" stroke-width="9.0" stroke-linecap="butt" stroke-linejoin="round"/><polyline points="1596.1,214.1 1598.6,214.1" fill="none" stroke="#989898" stroke-width="9.0" stroke-linecap="butt" stroke-linejoin="round"/></g>
<g filter="url(#bl2)"><polyline points="251.4,180.1 258.7,180.1" fill="none" stroke="#414141" stroke-width="15.0" stroke-linecap="butt" stroke-linejoin="round"/><polyline points="257.5,180.3 266.6,180.3" fill="none" stroke="#444444" stroke-width="15.0" stroke-linecap="butt" stroke-linejoin="round"/><polyline points="265.4,179.9 272.1,179.9" fill="none" stroke="#383838" stroke-width="15.0" stroke-linecap="butt" stroke-linejoin="round"/><polyline points="270.9,179.6 276.0,179.6" fill="none" stroke="#393939" stroke-width="15.0" stroke-linecap="butt" stroke-linejoin="round"/><polyline points="274.8,179.6 281.2,179.6" fill="none" stroke="#363636" stroke-width="15.0" stroke-linecap="butt" stroke-linejoin="round"/><polyline points="280.0,179.9 285.3,179.9" fill="none" stroke="#363636" stroke-width="15.0" stroke-linecap="butt" stroke-linejoin="round"/><polyline points="284.1,179.6 291.8,179.6" fill="none" stroke="#3a3a3a" stroke-width="15.0" stroke-linecap="butt" stroke-linejoin="round"/><polyline points="290.6,179.6 296.6,179.6" fill="none" stroke="#444444" stroke-width="15.0" stroke-linecap="butt" stroke-linejoin="round"/><polyline points="68.4,148.8 78.4,150.8" fill="none" stroke="#a1a1a1" stroke-width="12.0" stroke-linecap="butt" stroke-linejoin="round"/><polyline points="77.2,150.6 86.2,152.4" fill="none" stroke="#aaaaaa" stroke-width="12.0" stroke-linecap="butt" stroke-linejoin="round"/><polyline points="85.0,153.1 91.8,154.4" fill="none" stroke="#a6a6a6" stroke-width="12.0" stroke-linecap="butt" stroke-linejoin="round"/><polyline points="90.6,153.5 101.1,155.6" fill="none" stroke="#a6a6a6" stroke-width="12.0" stroke-linecap="butt" stroke-linejoin="round"/><polyline points="99.9,156.3 112.7,159.0" fill="none" stroke="#a3a3a3" stroke-width="12.0" stroke-linecap="butt" stroke-linejoin="round"/><polyline points="111.5,159.1 119.3,160.6" fill="none" stroke="#a6a6a6" stroke-width="12.0" stroke-linecap="butt" stroke-linejoin="round"/><polyline points="118.1,160.1 127.1,161.9" fill="none" stroke="#aaaaaa" stroke-width="12.0" stroke-linecap="butt" stroke-linejoin="round"/><polyline points="125.9,162.5 138.6,165.2" fill="none" stroke="#aaaaaa" stroke-width="12.0" stroke-linecap="butt" stroke-linejoin="round"/><polyline points="137.4,164.9 145.7,166.5" fill="none" stroke="#a4a4a4" stroke-width="12.0" stroke-linecap="butt" stroke-linejoin="round"/><polyline points="144.5,166.3 151.3,167.6" fill="none" stroke="#a3a3a3" stroke-width="12.0" stroke-linecap="butt" stroke-linejoin="round"/><polyline points="150.1,167.8 163.6,170.7" fill="none" stroke="#ababab" stroke-width="12.0" stroke-linecap="butt" stroke-linejoin="round"/><polyline points="162.4,170.6 175.8,173.4" fill="none" stroke="#a3a3a3" stroke-width="12.0" stroke-linecap="butt" stroke-linejoin="round"/><polyline points="174.6,173.3 182.6,174.9" fill="none" stroke="#a7a7a7" stroke-width="12.0" stroke-linecap="butt" stroke-linejoin="round"/><polyline points="181.4,175.1 194.1,177.8" fill="none" stroke="#a8a8a8" stroke-width="12.0" stroke-linecap="butt" stroke-linejoin="round"/><polyline points="192.9,178.0 200.1,179.4" fill="none" stroke="#ababab" stroke-width="12.0" stroke-linecap="butt" stroke-linejoin="round"/><polyline points="198.9,179.2 210.9,181.7" fill="none" stroke="#a2a2a2" stroke-width="12.0" stroke-linecap="butt" stroke-linejoin="round"/><polyline points="209.7,182.1 218.7,183.9" fill="none" stroke="#acacac" stroke-width="12.0" stroke-linecap="butt" stroke-linejoin="round"/><polyline points="217.5,184.0 227.0,186.0" fill="none" stroke="#a9a9a9" stroke-width="12.0" stroke-linecap="butt" stroke-linejoin="round"/><polyline points="225.8,185.2 233.3,186.6" fill="none" stroke="#ababab" stroke-width="12.0" stroke-linecap="butt" stroke-linejoin="round"/><polyline points="232.1,187.3 239.8,188.8" fill="none" stroke="#acacac" stroke-width="12.0" stroke-linecap="butt" stroke-linejoin="round"/><polyline points="238.6,188.5 247.7,190.4" fill="none" stroke="#a2a2a2" stroke-width="12.0" stroke-linecap="butt" stroke-linejoin="round"/><polyline points="246.5,190.5 253.6,191.6" fill="none" stroke="#a6a6a6" stroke-width="12.0" stroke-linecap="butt" stroke-linejoin="round"/><polyline points="251.4,195.4 261.1,195.4" fill="none" stroke="#a4a4a4" stroke-width="11.0" stroke-linecap="butt" stroke-linejoin="round"/><polyline points="259.9,194.8 268.3,194.8" fill="none" stroke="#9d9d9d" stroke-width="11.0" stroke-linecap="butt" stroke-linejoin="round"/><polyline points="267.1,194.9 275.6,194.9" fill="none" stroke="#9c9c9c" stroke-width="11.0" stroke-linecap="butt" stroke-linejoin="round"/><polyline points="274.4,195.0 283.6,195.0" fill="none" stroke="#a1a1a1" stroke-width="11.0" stroke-linecap="butt" stroke-linejoin="round"/><polyline points="282.4,195.4 292.0,195.4" fill="none" stroke="#a0a0a0" stroke-width="11.0" stroke-linecap="butt" stroke-linejoin="round"/><polyline points="290.8,194.5 296.6,194.5" fill="none" stroke="#9f9f9f" stroke-width="11.0" stroke-linecap="butt" stroke-linejoin="round"/><polyline points="106.0,151.9 106.0,162.9" fill="none" stroke="#bebebe" stroke-width="3.5" stroke-linecap="butt" stroke-linejoin="round"/><polyline points="112.0,153.3 112.0,164.3" fill="none" stroke="#bebebe" stroke-width="3.5" stroke-linecap="butt" stroke-linejoin="round"/><polyline points="118.0,154.7 118.0,165.7" fill="none" stroke="#bebebe" stroke-width="3.5" stroke-linecap="butt" stroke-linejoin="round"/><polyline points="124.0,156.1 124.0,167.1" fill="none" stroke="#bebebe" stroke-width="3.5" stroke-linecap="butt" stroke-linejoin="round"/><polyline points="131.0,157.7 131.0,168.7" fill="none" stroke="#bebebe" stroke-width="3.5" stroke-linecap="butt" stroke-linejoin="round"/><polyline points="150.0,162.2 150.0,173.2" fill="none" stroke="#bebebe" stroke-width="3.5" stroke-linecap="butt" stroke-linejoin="round"/><polyline points="172.0,167.3 172.0,178.3" fill="none" stroke="#bebebe" stroke-width="3.5" stroke-linecap="butt" stroke-linejoin="round"/><polyline points="186.0,170.6 186.0,181.6" fill="none" stroke="#bebebe" stroke-width="3.5" stroke-linecap="butt" stroke-linejoin="round"/><polyline points="205.0,175.0 205.0,186.0" fill="none" stroke="#bebebe" stroke-width="3.5" stroke-linecap="butt" stroke-linejoin="round"/><polyline points="222.0,179.0 222.0,190.0" fill="none" stroke="#bebebe" stroke-width="3.5" stroke-linecap="butt" stroke-linejoin="round"/><polyline points="91.4,168.1 96.8,169.1" fill="none" stroke="#393939" stroke-width="11.0" stroke-linecap="butt" stroke-linejoin="round"/><polyline points="95.6,168.7 105.1,170.6" fill="none" stroke="#3b3b3b" stroke-width="11.0" stroke-linecap="butt" stroke-linejoin="round"/><polyline points="103.9,171.0 112.4,172.7" fill="none" stroke="#383838" stroke-width="11.0" stroke-linecap="butt" stroke-linejoin="round"/><polyline points="111.2,171.9 118.0,173.2" fill="none" stroke="#424242" stroke-width="11.0" stroke-linecap="butt" stroke-linejoin="round"/><polyline points="116.8,174.0 125.3,175.7" fill="none" stroke="#454545" stroke-width="11.0" stroke-linecap="butt" stroke-linejoin="round"/><polyline points="124.1,175.3 133.0,177.1" fill="none" stroke="#3e3e3e" stroke-width="11.0" stroke-linecap="butt" stroke-linejoin="round"/><polyline points="131.8,177.1 139.7,178.7" fill="none" stroke="#3e3e3e" stroke-width="11.0" stroke-linecap="butt" stroke-linejoin="round"/><polyline points="138.5,179.2 140.6,179.4" fill="none" stroke="#454545" stroke-width="11.0" stroke-linecap="butt" stroke-linejoin="round"/><ellipse cx="154.0" cy="184.5" rx="11.0" ry="5.5" fill="#2c2c2c"/><polyline points="139.4,178.9 149.0,180.8" fill="none" stroke="#4e4e4e" stroke-width="9.0" stroke-linecap="butt" stroke-linejoin="round"/><polyline points="147.8,180.2 154.6,181.5" fill="none" stroke="#454545" stroke-width="9.0" stroke-linecap="butt" stroke-linejoin="round"/><polyline points="153.4,181.8 159.8,183.0" fill="none" stroke="#4d4d4d" stroke-width="9.0" stroke-linecap="butt" stroke-linejoin="round"/><polyline points="158.6,183.1 165.6,184.4" fill="none" stroke="#4c4c4c" stroke-width="9.0" stroke-linecap="butt" stroke-linejoin="round"/><polyline points="164.4,184.7 176.1,187.2" fill="none" stroke="#474747" stroke-width="9.0" stroke-linecap="butt" stroke-linejoin="round"/><polyline points="174.9,186.6 183.4,188.3" fill="none" stroke="#505050" stroke-width="9.0" stroke-linecap="butt" stroke-linejoin="round"/><polyline points="182.2,188.3 189.2,189.6" fill="none" stroke="#4a4a4a" stroke-width="9.0" stroke-linecap="butt" stroke-linejoin="round"/><polyline points="188.0,189.5 195.3,190.9" fill="none" stroke="#4d4d4d" stroke-width="9.0" stroke-linecap="butt" stroke-linejoin="round"/><polyline points="194.1,191.0 203.6,193.0" fill="none" stroke="#444444" stroke-width="9.0" stroke-linecap="butt" stroke-linejoin="round"/><polyline points="202.4,193.1 212.4,195.1" fill="none" stroke="#454545" stroke-width="9.0" stroke-linecap="butt" stroke-linejoin="round"/><polyline points="211.2,195.7 215.6,196.4" fill="none" stroke="#454545" stroke-width="9.0" stroke-linecap="butt" stroke-linejoin="round"/><polyline points="214.4,196.7 220.0,197.9" fill="none" stroke="#3c3c3c" stroke-width="11.0" stroke-linecap="butt" stroke-linejoin="round"/><polyline points="218.8,198.0 226.6,199.8" fill="none" stroke="#454545" stroke-width="11.0" stroke-linecap="butt" stroke-linejoin="round"/><polyline points="225.4,199.8 231.6,201.1" fill="none" stroke="#414141" stroke-width="11.0" stroke-linecap="butt" stroke-linejoin="round"/><polyline points="230.4,200.1 236.3,201.3" fill="none" stroke="#434343" stroke-width="11.0" stroke-linecap="butt" stroke-linejoin="round"/><polyline points="235.1,202.4 240.9,203.6" fill="none" stroke="#424242" stroke-width="11.0" stroke-linecap="butt" stroke-linejoin="round"/><polyline points="239.7,203.5 245.6,204.8" fill="none" stroke="#393939" stroke-width="11.0" stroke-linecap="butt" stroke-linejoin="round"/><polyline points="244.4,204.1 252.3,205.9" fill="none" stroke="#414141" stroke-width="11.0" stroke-linecap="butt" stroke-linejoin="round"/><polyline points="251.1,205.7 258.0,206.8" fill="none" stroke="#404040" stroke-width="11.0" stroke-linecap="butt" stroke-linejoin="round"/><polyline points="256.8,206.8 262.9,207.2" fill="none" stroke="#393939" stroke-width="11.0" stroke-linecap="butt" stroke-linejoin="round"/><polyline points="261.7,207.4 268.8,207.9" fill="none" stroke="#444444" stroke-width="11.0" stroke-linecap="butt" stroke-linejoin="round"/><polyline points="267.6,207.7 275.8,208.3" fill="none" stroke="#3e3e3e" stroke-width="11.0" stroke-linecap="butt" stroke-linejoin="round"/><polyline points="274.6,208.1 281.4,208.6" fill="none" stroke="#444444" stroke-width="11.0" stroke-linecap="butt" stroke-linejoin="round"/><polyline points="280.2,209.2 286.7,209.6" fill="none" stroke="#474747" stroke-width="11.0" stroke-linecap="butt" stroke-linejoin="round"/><polyline points="285.5,209.6 295.4,210.3" fill="none" stroke="#404040" stroke-width="11.0" stroke-linecap="butt" stroke-linejoin="round"/><polyline points="294.2,210.4 296.6,210.5" fill="none" stroke="#434343" stroke-width="11.0" stroke-linecap="butt" stroke-linejoin="round"/><ellipse cx="280.0" cy="211.0" rx="14.0" ry="5.5" fill="#303030"/><polyline points="100.0,177.5 100.0,199.5" fill="none" stroke="#bdbdbd" stroke-width="4.4" stroke-linecap="butt" stroke-linejoin="round"/><polyline points="104.0,180.4 104.0,201.4" fill="none" stroke="#c4c4c4" stroke-width="4.4" stroke-linecap="butt" stroke-linejoin="round"/><polyline points="110.0,183.8 110.0,199.8" fill="none" stroke="#b8b8b8" stroke-width="4.4" stroke-linecap="butt" stroke-linejoin="round"/><polyline points="123.0,188.9 123.0,205.9" fill="none" stroke="#bdbdbd" stroke-width="4.4" stroke-linecap="butt" stroke-linejoin="round"/><polyline points="130.0,192.5 130.0,207.5" fill="none" stroke="#b6b6b6" stroke-width="4.4" stroke-linecap="butt" stroke-linejoin="round"/><polyline points="138.0,194.4 138.0,209.4" fill="none" stroke="#c0c0c0" stroke-width="4.4" stroke-linecap="butt" stroke-linejoin="round"/><polyline points="145.0,194.0 145.0,213.0" fill="none" stroke="#d1d1d1" stroke-width="4.4" stroke-linecap="butt" stroke-linejoin="round"/><polyline points="149.0,196.9 149.0,214.9" fill="none" stroke="#d6d6d6" stroke-width="4.4" stroke-linecap="butt" stroke-linejoin="round"/><polyline points="154.0,198.1 154.0,216.1" fill="none" stroke="#cecece" stroke-width="4.4" stroke-linecap="butt" stroke-linejoin="round"/><polyline points="160.0,201.5 160.0,217.5" fill="none" stroke="#d4d4d4" stroke-width="4.4" stroke-linecap="butt" stroke-linejoin="round"/><polyline points="165.0,200.7 165.0,218.7" fill="none" stroke="#d8d8d8" stroke-width="4.4" stroke-linecap="butt" stroke-linejoin="round"/><polyline points="170.0,205.9 170.0,219.9" fill="none" stroke="#c7c7c7" stroke-width="4.4" stroke-linecap="butt" stroke-linejoin="round"/><polyline points="178.0,205.7 178.0,221.7" fill="none" stroke="#cecece" stroke-width="4.4" stroke-linecap="butt" stroke-linejoin="round"/><polyline points="183.0,206.9 183.0,223.9" fill="none" stroke="#d2d2d2" stroke-width="4.4" stroke-linecap="butt" stroke-linejoin="round"/><polyline points="189.0,210.3 189.0,224.3" fill="none" stroke="#cacaca" stroke-width="4.4" stroke-linecap="butt" stroke-linejoin="round"/><polyline points="198.0,210.4 198.0,228.4" fill="none" stroke="#d4d4d4" stroke-width="4.4" stroke-linecap="butt" stroke-linejoin="round"/><polyline points="214.0,218.1 214.0,230.1" fill="none" stroke="#b8b8b8" stroke-width="4.4" stroke-linecap="butt" stroke-linejoin="round"/><polyline points="226.0,222.9 226.0,234.9" fill="none" stroke="#bdbdbd" stroke-width="4.4" stroke-linecap="butt" stroke-linejoin="round"/><polyline points="294.4,194.2 301.9,194.4" fill="none" stroke="#a5a5a5" stroke-width="10.0" stroke-linecap="butt" stroke-linejoin="round"/><polyline points="300.7,193.6 312.6,193.9" fill="none" stroke="#9f9f9f" stroke-width="10.0" stroke-linecap="butt" stroke-linejoin="round"/><polyline points="311.4,194.8 325.2,195.1" fill="none" stroke="#a6a6a6" stroke-width="10.0" stroke-linecap="butt" stroke-linejoin="round"/><polyline points="324.0,194.4 332.0,194.5" fill="none" stroke="#a0a0a0" stroke-width="10.0" stroke-linecap="butt" stroke-linejoin="round"/><polyline points="330.8,195.1 345.6,195.4" fill="none" stroke="#a2a2a2" stroke-width="10.0" stroke-linecap="butt" stroke-linejoin="round"/><polyline points="344.4,195.2 355.2,195.5" fill="none" stroke="#9a9a9a" stroke-width="10.0" stroke-linecap="butt" stroke-linejoin="round"/><polyline points="354.0,195.8 363.1,196.0" fill="none" stroke="#a2a2a2" stroke-width="10.0" stroke-linecap="butt" stroke-linejoin="round"/><polyline points="361.9,195.4 370.1,195.5" fill="none" stroke="#a2a2a2" stroke-width="10.0" stroke-linecap="butt" stroke-linejoin="round"/><polyline points="368.9,195.3 377.0,195.5" fill="none" stroke="#a0a0a0" stroke-width="10.0" stroke-linecap="butt" stroke-linejoin="round"/><polyline points="375.8,195.7 386.1,195.9" fill="none" stroke="#a1a1a1" stroke-width="10.0" stroke-linecap="butt" stroke-linejoin="round"/><polyline points="384.9,196.1 394.5,196.3" fill="none" stroke="#a6a6a6" stroke-width="10.0" stroke-linecap="butt" stroke-linejoin="round"/><polyline points="393.3,196.3 407.6,196.9" fill="none" stroke="#9d9d9d" stroke-width="10.0" stroke-linecap="butt" stroke-linejoin="round"/><polyline points="406.4,197.1 421.3,198.0" fill="none" stroke="#9e9e9e" stroke-width="10.0" stroke-linecap="butt" stroke-linejoin="round"/><polyline points="420.1,198.0 431.3,198.6" fill="none" stroke="#9f9f9f" stroke-width="10.0" stroke-linecap="butt" stroke-linejoin="round"/><polyline points="430.1,198.8 442.6,199.6" fill="none" stroke="#9d9d9d" stroke-width="10.0" stroke-linecap="butt" stroke-linejoin="round"/><polyline points="441.4,199.0 451.3,199.6" fill="none" stroke="#a2a2a2" stroke-width="10.0" stroke-linecap="butt" stroke-linejoin="round"/><polyline points="450.1,199.9 463.7,200.7" fill="none" stroke="#a0a0a0" stroke-width="10.0" stroke-linecap="butt" stroke-linejoin="round"/><polyline points="462.5,200.3 477.4,201.1" fill="none" stroke="#a4a4a4" stroke-width="10.0" stroke-linecap="butt" stroke-linejoin="round"/><polyline points="476.2,201.6 485.2,202.0" fill="none" stroke="#9e9e9e" stroke-width="10.0" stroke-linecap="butt" stroke-linejoin="round"/><polyline points="484.0,201.5 495.2,202.1" fill="none" stroke="#9d9d9d" stroke-width="10.0" stroke-linecap="butt" stroke-linejoin="round"/><polyline points="494.0,202.9 504.6,203.4" fill="none" stroke="#9c9c9c" stroke-width="10.0" stroke-linecap="butt" stroke-linejoin="round"/><polyline points="294.4,212.8 300.2,212.7" fill="none" stroke="#363636" stroke-width="16.0" stroke-linecap="butt" stroke-linejoin="round"/><polyline points="299.0,211.7 304.1,211.6" fill="none" stroke="#424242" stroke-width="16.0" stroke-linecap="butt" stroke-linejoin="round"/><polyline points="302.9,212.6 311.2,212.4" fill="none" stroke="#434343" stroke-width="16.0" stroke-linecap="butt" stroke-linejoin="round"/><polyline points="310.0,212.4 315.7,212.3" fill="none" stroke="#404040" stroke-width="16.0" stroke-linecap="butt" stroke-linejoin="round"/><polyline points="314.5,211.4 322.5,211.2" fill="none" stroke="#3a3a3a" stroke-width="16.0" stroke-linecap="butt" stroke-linejoin="round"/><polyline points="321.3,210.6 326.9,210.5" fill="none" stroke="#383838" stroke-width="16.0" stroke-linecap="butt" stroke-linejoin="round"/><polyline points="325.7,210.7 335.1,210.5" fill="none" stroke="#434343" stroke-width="16.0" stroke-linecap="butt" stroke-linejoin="round"/><polyline points="333.9,211.6 340.4,211.5" fill="none" stroke="#414141" stroke-width="16.0" stroke-linecap="butt" stroke-linejoin="round"/><polyline points="339.2,211.0 344.3,210.9" fill="none" stroke="#3a3a3a" stroke-width="16.0" stroke-linecap="butt" stroke-linejoin="round"/><polyline points="343.1,210.7 345.6,210.7" fill="none" stroke="#424242" stroke-width="16.0" stroke-linecap="butt" stroke-linejoin="round"/><polyline points="344.4,211.5 351.2,211.4" fill="none" stroke="#515151" stroke-width="16.0" stroke-linecap="butt" stroke-linejoin="round"/><polyline points="350.0,209.9 354.9,209.9" fill="none" stroke="#545454" stroke-width="16.0" stroke-linecap="butt" stroke-linejoin="round"/><polyline points="353.7,211.6 362.1,211.4" fill="none" stroke="#494949" stroke-width="16.0" stroke-linecap="butt" stroke-linejoin="round"/><polyline points="360.9,210.9 370.3,210.7" fill="none" stroke="#474747" stroke-width="16.0" stroke-linecap="butt" stroke-linejoin="round"/><polyline points="369.1,210.1 375.4,210.0" fill="none" stroke="#424242" stroke-width="16.0" stroke-linecap="butt" stroke-linejoin="round"/><polyline points="374.2,210.7 383.4,210.6" fill="none" stroke="#555555" stroke-width="16.0" stroke-linecap="butt" stroke-linejoin="round"/><polyline points="382.2,210.2 388.2,210.2" fill="none" stroke="#555555" stroke-width="16.0" stroke-linecap="butt" stroke-linejoin="round"/><polyline points="387.0,209.7 393.6,209.6" fill="none" stroke="#4b4b4b" stroke-width="16.0" stroke-linecap="butt" stroke-linejoin="round"/><polyline points="392.4,209.5 401.7,209.4" fill="none" stroke="#525252" stroke-width="16.0" stroke-linecap="butt" stroke-linejoin="round"/><polyline points="400.5,210.6 402.6,210.6" fill="none" stroke="#4e4e4e" stroke-width="16.0" stroke-linecap="butt" stroke-linejoin="round"/><polyline points="399.4,210.8 407.1,211.0" fill="none" stroke="#222222" stroke-width="18.0" stroke-linecap="butt" stroke-linejoin="round"/><polyline points="405.9,209.7 413.0,209.9" fill="none" stroke="#1c1c1c" stroke-width="18.0" stroke-linecap="butt" stroke-linejoin="round"/><polyline points="411.8,210.9 417.7,211.0" fill="none" stroke="#222222" stroke-width="18.0" stroke-linecap="butt" stroke-linejoin="round"/><polyline points="416.5,209.9 422.5,210.1" fill="none" stroke="#1c1c1c" stroke-width="18.0" stroke-linecap="butt" stroke-linejoin="round"/><polyline points="421.3,211.3 428.1,211.4" fill="none" stroke="#1d1d1d" stroke-width="18.0" stroke-linecap="butt" stroke-linejoin="round"/><polyline points="426.9,210.8 432.6,210.9" fill="none" stroke="#1e1e1e" stroke-width="18.0" stroke-linecap="butt" stroke-linejoin="round"/><polyline points="431.4,211.6 437.6,211.7" fill="none" stroke="#1e1e1e" stroke-width="18.0" stroke-linecap="butt" stroke-linejoin="round"/><polyline points="436.4,211.8 443.9,212.0" fill="none" stroke="#1f1f1f" stroke-width="18.0" stroke-linecap="butt" stroke-linejoin="round"/><polyline points="442.7,212.0 450.6,212.2" fill="none" stroke="#242424" stroke-width="18.0" stroke-linecap="butt" stroke-linejoin="round"/><polyline points="449.4,211.3 457.3,211.4" fill="none" stroke="#2a2a2a" stroke-width="18.0" stroke-linecap="butt" stroke-linejoin="round"/><polyline points="456.1,211.1 463.6,211.3" fill="none" stroke="#292929" stroke-width="18.0" stroke-linecap="butt" stroke-linejoin="round"/><polyline points="462.4,212.4 468.3,212.5" fill="none" stroke="#292929" stroke-width="18.0" stroke-linecap="butt" stroke-linejoin="round"/><polyline points="467.1,211.8 472.1,211.9" fill="none" stroke="#242424" stroke-width="18.0" stroke-linecap="butt" stroke-linejoin="round"/><polyline points="470.9,211.7 475.6,211.8" fill="none" stroke="#282828" stroke-width="18.0" stroke-linecap="butt" stroke-linejoin="round"/><polyline points="474.4,212.3 478.8,212.5" fill="none" stroke="#282828" stroke-width="18.0" stroke-linecap="butt" stroke-linejoin="round"/><polyline points="477.6,211.7 485.1,212.0" fill="none" stroke="#262626" stroke-width="18.0" stroke-linecap="butt" stroke-linejoin="round"/><polyline points="483.9,212.3 490.6,212.6" fill="none" stroke="#232323" stroke-width="18.0" stroke-linecap="butt" stroke-linejoin="round"/><polyline points="489.4,213.1 495.3,213.3" fill="none" stroke="#232323" stroke-width="18.0" stroke-linecap="butt" stroke-linejoin="round"/><polyline points="494.1,213.3 498.4,213.4" fill="none" stroke="#242424" stroke-width="18.0" stroke-linecap="butt" stroke-linejoin="round"/><polyline points="497.2,213.7 504.5,213.9" fill="none" stroke="#232323" stroke-width="18.0" stroke-linecap="butt" stroke-linejoin="round"/><polyline points="503.3,212.9 504.6,212.9" fill="none" stroke="#1e1e1e" stroke-width="18.0" stroke-linecap="butt" stroke-linejoin="round"/><polyline points="424.4,211.6 429.0,211.7" fill="none" stroke="#0e0e0e" stroke-width="9.0" stroke-linecap="butt" stroke-linejoin="round"/><polyline points="427.8,211.1 434.5,211.3" fill="none" stroke="#111111" stroke-width="9.0" stroke-linecap="butt" stroke-linejoin="round"/><polyline points="433.3,211.3 439.6,211.4" fill="none" stroke="#0e0e0e" stroke-width="9.0" stroke-linecap="butt" stroke-linejoin="round"/><polyline points="438.4,211.5 446.4,211.7" fill="none" stroke="#121212" stroke-width="9.0" stroke-linecap="butt" stroke-linejoin="round"/><polyline points="445.2,212.8 452.3,213.0" fill="none" stroke="#0a0a0a" stroke-width="9.0" stroke-linecap="butt" stroke-linejoin="round"/><polyline points="451.1,213.2 457.3,213.3" fill="none" stroke="#131313" stroke-width="9.0" stroke-linecap="butt" stroke-linejoin="round"/><polyline points="456.1,213.3 463.4,213.5" fill="none" stroke="#090909" stroke-width="9.0" stroke-linecap="butt" stroke-linejoin="round"/><polyline points="462.2,212.2 469.4,212.4" fill="none" stroke="#131313" stroke-width="9.0" stroke-linecap="butt" stroke-linejoin="round"/><polyline points="468.2,212.4 475.7,212.7" fill="none" stroke="#0e0e0e" stroke-width="9.0" stroke-linecap="butt" stroke-linejoin="round"/><polyline points="474.5,212.8 479.5,213.0" fill="none" stroke="#0e0e0e" stroke-width="9.0" stroke-linecap="butt" stroke-linejoin="round"/><polyline points="478.3,212.9 482.7,213.0" fill="none" stroke="#0a0a0a" stroke-width="9.0" stroke-linecap="butt" stroke-linejoin="round"/><polyline points="481.5,214.2 488.4,214.4" fill="none" stroke="#0a0a0a" stroke-width="9.0" stroke-linecap="butt" stroke-linejoin="round"/><polyline points="487.2,213.8 490.6,213.9" fill="none" stroke="#101010" stroke-width="9.0" stroke-linecap="butt" stroke-linejoin="round"/><polyline points="388.0,236.0 388.0,250.0" fill="none" stroke="#a0a0a0" stroke-width="4.0" stroke-linecap="butt" stroke-linejoin="round"/><polyline points="503.4,202.6 516.2,203.5" fill="none" stroke="#a0a0a0" stroke-width="7.0" stroke-linecap="butt" stroke-linejoin="round"/><polyline points="515.0,203.2 526.6,204.0" fill="none" stroke="#a1a1a1" stroke-width="7.0" stroke-linecap="butt" stroke-linejoin="round"/><polyline points="525.4,204.2 534.7,204.8" fill="none" stroke="#a3a3a3" stroke-width="7.0" stroke-linecap="butt" stroke-linejoin="round"/><polyline points="533.5,204.3 547.8,205.3" fill="none" stroke="#9c9c9c" stroke-width="7.0" stroke-linecap="butt" stroke-linejoin="round"/><polyline points="546.6,206.1 559.7,207.0" fill="none" stroke="#a0a0a0" stroke-width="7.0" stroke-linecap="butt" stroke-linejoin="round"/><polyline points="558.5,206.5 572.7,207.6" fill="none" stroke="#9b9b9b" stroke-width="7.0" stroke-linecap="butt" stroke-linejoin="round"/><polyline points="571.5,207.9 583.8,208.7" fill="none" stroke="#a0a0a0" stroke-width="7.0" stroke-linecap="butt" stroke-linejoin="round"/><polyline points="582.6,208.8 593.5,209.6" fill="none" stroke="#a0a0a0" stroke-width="7.0" stroke-linecap="butt" stroke-linejoin="round"/><polyline points="592.3,209.5 603.0,210.2" fill="none" stroke="#9f9f9f" stroke-width="7.0" stroke-linecap="butt" stroke-linejoin="round"/><polyline points="601.8,210.1 610.7,210.4" fill="none" stroke="#9a9a9a" stroke-width="7.0" stroke-linecap="butt" stroke-linejoin="round"/><polyline points="609.5,209.9 617.9,210.1" fill="none" stroke="#9a9a9a" stroke-width="7.0" stroke-linecap="butt" stroke-linejoin="round"/><polyline points="616.7,210.2 626.7,210.7" fill="none" stroke="#999999" stroke-width="7.0" stroke-linecap="butt" stroke-linejoin="round"/><polyline points="625.5,211.1 638.2,213.5" fill="none" stroke="#a0a0a0" stroke-width="7.0" stroke-linecap="butt" stroke-linejoin="round"/><polyline points="637.0,213.5 640.6,214.0" fill="none" stroke="#9d9d9d" stroke-width="7.0" stroke-linecap="butt" stroke-linejoin="round"/><polyline points="503.4,220.0 510.9,220.0" fill="none" stroke="#303030" stroke-width="17.0" stroke-linecap="butt" stroke-linejoin="round"/><polyline points="509.7,220.1 517.5,220.0" fill="none" stroke="#313131" stroke-width="17.0" stroke-linecap="butt" stroke-linejoin="round"/><polyline points="516.3,218.7 521.0,218.7" fill="none" stroke="#3e3e3e" stroke-width="17.0" stroke-linecap="butt" stroke-linejoin="round"/><polyline points="519.8,219.8 526.5,219.8" fill="none" stroke="#3a3a3a" stroke-width="17.0" stroke-linecap="butt" stroke-linejoin="round"/><polyline points="525.3,218.7 529.9,218.7" fill="none" stroke="#3d3d3d" stroke-width="17.0" stroke-linecap="butt" stroke-linejoin="round"/><polyline points="528.7,219.2 534.2,219.1" fill="none" stroke="#2f2f2f" stroke-width="17.0" stroke-linecap="butt" stroke-linejoin="round"/><polyline points="533.0,219.5 538.3,219.5" fill="none" stroke="#363636" stroke-width="17.0" stroke-linecap="butt" stroke-linejoin="round"/><polyline points="537.1,219.2 545.2,219.1" fill="none" stroke="#3e3e3e" stroke-width="17.0" stroke-linecap="butt" stroke-linejoin="round"/><polyline points="544.0,219.0 548.3,219.0" fill="none" stroke="#373737" stroke-width="17.0" stroke-linecap="butt" stroke-linejoin="round"/><polyline points="547.1,219.4 552.7,219.4" fill="none" stroke="#393939" stroke-width="17.0" stroke-linecap="butt" stroke-linejoin="round"/><polyline points="551.5,218.5 559.1,218.4" fill="none" stroke="#3e3e3e" stroke-width="17.0" stroke-linecap="butt" stroke-linejoin="round"/><polyline points="557.9,218.6 562.1,218.5" fill="none" stroke="#3d3d3d" stroke-width="17.0" stroke-linecap="butt" stroke-linejoin="round"/><polyline points="560.9,218.9 565.2,218.8" fill="none" stroke="#383838" stroke-width="17.0" stroke-linecap="butt" stroke-linejoin="round"/><polyline points="564.0,218.8 568.9,218.7" fill="none" stroke="#353535" stroke-width="17.0" stroke-linecap="butt" stroke-linejoin="round"/><polyline points="567.7,219.3 572.9,219.2" fill="none" stroke="#343434" stroke-width="17.0" stroke-linecap="butt" stroke-linejoin="round"/><polyline points="571.7,218.6 578.7,218.4" fill="none" stroke="#313131" stroke-width="17.0" stroke-linecap="butt" stroke-linejoin="round"/><polyline points="577.5,218.8 582.1,218.7" fill="none" stroke="#3c3c3c" stroke-width="17.0" stroke-linecap="butt" stroke-linejoin="round"/><polyline points="580.9,218.1 587.6,217.9" fill="none" stroke="#363636" stroke-width="17.0" stroke-linecap="butt" stroke-linejoin="round"/><polyline points="586.4,217.5 594.1,217.3" fill="none" stroke="#3f3f3f" stroke-width="17.0" stroke-linecap="butt" stroke-linejoin="round"/><polyline points="592.9,217.6 598.0,217.4" fill="none" stroke="#3f3f3f" stroke-width="17.0" stroke-linecap="butt" stroke-linejoin="round"/><polyline points="596.8,218.3 602.5,218.2" fill="none" stroke="#333333" stroke-width="17.0" stroke-linecap="butt" stroke-linejoin="round"/><polyline points="601.3,218.0 607.6,217.8" fill="none" stroke="#3d3d3d" stroke-width="17.0" stroke-linecap="butt" stroke-linejoin="round"/><polyline points="606.4,217.2 612.0,217.1" fill="none" stroke="#323232" stroke-width="17.0" stroke-linecap="butt" stroke-linejoin="round"/><polyline points="610.8,217.6 617.7,217.5" fill="none" stroke="#323232" stroke-width="17.0" stroke-linecap="butt" stroke-linejoin="round"/><polyline points="616.5,217.2 622.6,217.1" fill="none" stroke="#313131" stroke-width="17.0" stroke-linecap="butt" stroke-linejoin="round"/><polyline points="621.4,216.6 629.1,216.4" fill="none" stroke="#383838" stroke-width="15.0" stroke-linecap="butt" stroke-linejoin="round"/><polyline points="627.9,217.2 635.0,217.0" fill="none" stroke="#383838" stroke-width="15.0" stroke-linecap="butt" stroke-linejoin="round"/><polyline points="633.8,216.3 638.9,216.3" fill="none" stroke="#3e3e3e" stroke-width="15.0" stroke-linecap="butt" stroke-linejoin="round"/><polyline points="637.7,216.1 640.6,216.1" fill="none" stroke="#474747" stroke-width="15.0" stroke-linecap="butt" stroke-linejoin="round"/><polyline points="507.4,222.1 512.7,222.1" fill="none" stroke="#242424" stroke-width="7.0" stroke-linecap="butt" stroke-linejoin="round"/><polyline points="511.5,221.8 521.0,221.8" fill="none" stroke="#2e2e2e" stroke-width="7.0" stroke-linecap="butt" stroke-linejoin="round"/><polyline points="519.8,221.5 525.6,221.5" fill="none" stroke="#242424" stroke-width="7.0" stroke-linecap="butt" stroke-linejoin="round"/><polyline points="524.4,220.7 531.0,220.6" fill="none" stroke="#282828" stroke-width="7.0" stroke-linecap="butt" stroke-linejoin="round"/><polyline points="529.8,221.3 537.9,221.2" fill="none" stroke="#2c2c2c" stroke-width="7.0" stroke-linecap="butt" stroke-linejoin="round"/><polyline points="536.7,221.3 542.2,221.3" fill="none" stroke="#282828" stroke-width="7.0" stroke-linecap="butt" stroke-linejoin="round"/><polyline points="541.0,221.1 550.2,221.0" fill="none" stroke="#2b2b2b" stroke-width="7.0" stroke-linecap="butt" stroke-linejoin="round"/><polyline points="549.0,220.7 555.8,220.7" fill="none" stroke="#2e2e2e" stroke-width="7.0" stroke-linecap="butt" stroke-linejoin="round"/><polyline points="554.6,221.3 563.1,221.2" fill="none" stroke="#303030" stroke-width="7.0" stroke-linecap="butt" stroke-linejoin="round"/><polyline points="561.9,220.9 569.8,220.6" fill="none" stroke="#272727" stroke-width="7.0" stroke-linecap="butt" stroke-linejoin="round"/><polyline points="568.6,220.6 573.9,220.5" fill="none" stroke="#2f2f2f" stroke-width="7.0" stroke-linecap="butt" stroke-linejoin="round"/><polyline points="572.7,220.2 580.5,220.0" fill="none" stroke="#292929" stroke-width="7.0" stroke-linecap="butt" stroke-linejoin="round"/><polyline points="579.3,220.2 587.1,220.0" fill="none" stroke="#2d2d2d" stroke-width="7.0" stroke-linecap="butt" stroke-linejoin="round"/><polyline points="585.9,220.3 591.6,220.2" fill="none" stroke="#2e2e2e" stroke-width="7.0" stroke-linecap="butt" stroke-linejoin="round"/><polyline points="590.4,220.6 597.5,220.5" fill="none" stroke="#232323" stroke-width="7.0" stroke-linecap="butt" stroke-linejoin="round"/><polyline points="596.3,220.2 600.6,220.1" fill="none" stroke="#313131" stroke-width="7.0" stroke-linecap="butt" stroke-linejoin="round"/><polyline points="503.4,251.8 520.0,252.8" fill="none" stroke="#595959" stroke-width="5.5" stroke-linecap="butt" stroke-linejoin="round"/><polyline points="518.8,252.7 531.3,253.5" fill="none" stroke="#575757" stroke-width="5.5" stroke-linecap="butt" stroke-linejoin="round"/><polyline points="530.1,253.5 541.2,254.2" fill="none" stroke="#595959" stroke-width="5.5" stroke-linecap="butt" stroke-linejoin="round"/><polyline points="540.0,254.5 552.5,255.2" fill="none" stroke="#5b5b5b" stroke-width="5.5" stroke-linecap="butt" stroke-linejoin="round"/><polyline points="551.3,255.4 568.6,256.4" fill="none" stroke="#575757" stroke-width="5.5" stroke-linecap="butt" stroke-linejoin="round"/><polyline points="567.4,256.4 584.5,257.4" fill="none" stroke="#585858" stroke-width="5.5" stroke-linecap="butt" stroke-linejoin="round"/><polyline points="583.3,256.8 597.8,257.6" fill="none" stroke="#575757" stroke-width="5.5" stroke-linecap="butt" stroke-linejoin="round"/><polyline points="596.6,257.8 611.3,258.7" fill="none" stroke="#585858" stroke-width="5.5" stroke-linecap="butt" stroke-linejoin="round"/><polyline points="610.1,259.1 620.7,259.7" fill="none" stroke="#595959" stroke-width="5.5" stroke-linecap="butt" stroke-linejoin="round"/><polyline points="619.5,259.7 625.6,259.7" fill="none" stroke="#585858" stroke-width="5.5" stroke-linecap="butt" stroke-linejoin="round"/><ellipse cx="643.0" cy="236.0" rx="6.0" ry="7.0" fill="#505050"/><polyline points="648.0,247.0 660.0,236.0 674.0,228.0 688.0,224.5 702.0,228.0 716.0,236.0 728.0,246.0" fill="none" stroke="#9e9e9e" stroke-width="5.0" stroke-linecap="butt" stroke-linejoin="round"/><polyline points="645.0,262.0 650.0,256.5 657.0,250.0 665.0,244.5 675.0,240.0 687.0,237.5 699.0,240.5 710.0,246.0 722.0,252.5 734.0,260.0" fill="none" stroke="#464646" stroke-width="9.0" stroke-linecap="butt" stroke-linejoin="round"/><polyline points="670.0,241.0 687.0,237.0 702.0,242.0" fill="none" stroke="#242424" stroke-width="6.0" stroke-linecap="butt" stroke-linejoin="round"/><ellipse cx="722.0" cy="231.0" rx="11.0" ry="5.0" fill="#505050"/><polyline points="706.0,222.0 730.0,214.0 768.0,219.0" fill="none" stroke="#5c5c5c" stroke-width="4.0" stroke-linecap="butt" stroke-linejoin="round"/><polyline points="762.0,246.0 782.0,240.0" fill="none" stroke="#585858" stroke-width="4.0" stroke-linecap="butt" stroke-linejoin="round"/><polyline points="721.0,293.0 733.0,285.0 744.0,280.5 752.0,279.0 760.0,282.0 768.0,289.0 776.0,300.0" fill="none" stroke="#525252" stroke-width="6.0" stroke-linecap="butt" stroke-linejoin="round"/><polyline points="646.0,336.0 668.0,331.0 689.0,324.0" fill="none" stroke="#7d7d7d" stroke-width="3.0" stroke-linecap="butt" stroke-linejoin="round"/><polyline points="781.4,229.8 787.0,229.8" fill="none" stroke="#3b3b3b" stroke-width="14.5" stroke-linecap="butt" stroke-linejoin="round"/><polyline points="785.8,231.0 790.8,231.1" fill="none" stroke="#424242" stroke-width="14.5" stroke-linecap="butt" stroke-linejoin="round"/><polyline points="789.6,230.9 796.2,231.0" fill="none" stroke="#393939" stroke-width="14.5" stroke-linecap="butt" stroke-linejoin="round"/><polyline points="795.0,231.1 800.2,231.2" fill="none" stroke="#3f3f3f" stroke-width="14.5" stroke-linecap="butt" stroke-linejoin="round"/><polyline points="799.0,231.3 803.6,231.3" fill="none" stroke="#3f3f3f" stroke-width="14.5" stroke-linecap="butt" stroke-linejoin="round"/><polyline points="802.4,231.5 808.9,231.5" fill="none" stroke="#414141" stroke-width="14.5" stroke-linecap="butt" stroke-linejoin="round"/><polyline points="807.7,231.0 813.8,231.1" fill="none" stroke="#343434" stroke-width="14.5" stroke-linecap="butt" stroke-linejoin="round"/><polyline points="812.6,231.3 817.5,231.3" fill="none" stroke="#383838" stroke-width="14.5" stroke-linecap="butt" stroke-linejoin="round"/><polyline points="816.3,231.0 822.1,231.0" fill="none" stroke="#343434" stroke-width="14.5" stroke-linecap="butt" stroke-linejoin="round"/><polyline points="820.9,230.8 829.1,230.9" fill="none" stroke="#333333" stroke-width="14.5" stroke-linecap="butt" stroke-linejoin="round"/><polyline points="827.9,230.5 835.3,230.6" fill="none" stroke="#3c3c3c" stroke-width="14.5" stroke-linecap="butt" stroke-linejoin="round"/><polyline points="834.1,230.3 840.4,230.4" fill="none" stroke="#323232" stroke-width="14.5" stroke-linecap="butt" stroke-linejoin="round"/><polyline points="839.2,231.2 846.8,231.3" fill="none" stroke="#3b3b3b" stroke-width="14.5" stroke-linecap="butt" stroke-linejoin="round"/><polyline points="845.6,231.2 852.9,231.3" fill="none" stroke="#424242" stroke-width="14.5" stroke-linecap="butt" stroke-linejoin="round"/><polyline points="851.7,232.2 859.2,232.3" fill="none" stroke="#363636" stroke-width="14.5" stroke-linecap="butt" stroke-linejoin="round"/><polyline points="858.0,230.9 863.0,230.9" fill="none" stroke="#333333" stroke-width="14.5" stroke-linecap="butt" stroke-linejoin="round"/><polyline points="861.8,232.2 868.2,232.3" fill="none" stroke="#393939" stroke-width="14.5" stroke-linecap="butt" stroke-linejoin="round"/><polyline points="867.0,230.8 874.9,230.9" fill="none" stroke="#3c3c3c" stroke-width="14.5" stroke-linecap="butt" stroke-linejoin="round"/><polyline points="873.7,232.5 878.4,232.5" fill="none" stroke="#363636" stroke-width="14.5" stroke-linecap="butt" stroke-linejoin="round"/><polyline points="877.2,232.5 883.9,232.6" fill="none" stroke="#3d3d3d" stroke-width="14.5" stroke-linecap="butt" stroke-linejoin="round"/><polyline points="882.7,231.2 888.7,231.2" fill="none" stroke="#424242" stroke-width="14.5" stroke-linecap="butt" stroke-linejoin="round"/><polyline points="887.5,231.0 892.6,231.1" fill="none" stroke="#363636" stroke-width="14.5" stroke-linecap="butt" stroke-linejoin="round"/><polyline points="891.4,232.6 899.2,232.7" fill="none" stroke="#404040" stroke-width="14.5" stroke-linecap="butt" stroke-linejoin="round"/><polyline points="898.0,232.4 905.4,232.6" fill="none" stroke="#3d3d3d" stroke-width="14.5" stroke-linecap="butt" stroke-linejoin="round"/><polyline points="904.2,231.6 908.6,231.8" fill="none" stroke="#3f3f3f" stroke-width="14.5" stroke-linecap="butt" stroke-linejoin="round"/><polyline points="907.4,232.0 914.3,232.3" fill="none" stroke="#3c3c3c" stroke-width="14.5" stroke-linecap="butt" stroke-linejoin="round"/><polyline points="913.1,232.4 917.7,232.5" fill="none" stroke="#363636" stroke-width="14.5" stroke-linecap="butt" stroke-linejoin="round"/><polyline points="916.5,232.3 922.6,232.5" fill="none" stroke="#353535" stroke-width="14.5" stroke-linecap="butt" stroke-linejoin="round"/><polyline points="921.4,232.2 928.4,232.5" fill="none" stroke="#3e3e3e" stroke-width="14.5" stroke-linecap="butt" stroke-linejoin="round"/><polyline points="927.2,234.2 931.5,234.3" fill="none" stroke="#353535" stroke-width="14.5" stroke-linecap="butt" stroke-linejoin="round"/><polyline points="930.3,234.2 938.0,234.6" fill="none" stroke="#343434" stroke-width="14.5" stroke-linecap="butt" stroke-linejoin="round"/><polyline points="936.8,234.6 941.4,234.8" fill="none" stroke="#404040" stroke-width="14.5" stroke-linecap="butt" stroke-linejoin="round"/><polyline points="940.2,233.7 946.2,234.0" fill="none" stroke="#404040" stroke-width="14.5" stroke-linecap="butt" stroke-linejoin="round"/><polyline points="945.0,233.6 951.7,233.9" fill="none" stroke="#353535" stroke-width="14.5" stroke-linecap="butt" stroke-linejoin="round"/><polyline points="950.5,234.6 957.5,234.9" fill="none" stroke="#343434" stroke-width="14.5" stroke-linecap="butt" stroke-linejoin="round"/><polyline points="956.3,234.7 961.6,234.9" fill="none" stroke="#343434" stroke-width="14.5" stroke-linecap="butt" stroke-linejoin="round"/><polyline points="960.4,234.8 968.0,235.1" fill="none" stroke="#343434" stroke-width="14.5" stroke-linecap="butt" stroke-linejoin="round"/><polyline points="966.8,236.1 972.2,236.3" fill="none" stroke="#333333" stroke-width="14.5" stroke-linecap="butt" stroke-linejoin="round"/><polyline points="971.0,236.3 975.5,236.5" fill="none" stroke="#3d3d3d" stroke-width="14.5" stroke-linecap="butt" stroke-linejoin="round"/><polyline points="974.3,235.4 975.6,235.4" fill="none" stroke="#363636" stroke-width="14.5" stroke-linecap="butt" stroke-linejoin="round"/><polyline points="974.4,236.5 980.1,236.8" fill="none" stroke="#494949" stroke-width="12.0" stroke-linecap="butt" stroke-linejoin="round"/><polyline points="978.9,235.6 983.4,235.8" fill="none" stroke="#474747" stroke-width="12.0" stroke-linecap="butt" stroke-linejoin="round"/><polyline points="982.2,235.8 989.4,236.1" fill="none" stroke="#494949" stroke-width="12.0" stroke-linecap="butt" stroke-linejoin="round"/><polyline points="988.2,236.2 992.6,236.2" fill="none" stroke="#3a3a3a" stroke-width="12.0" stroke-linecap="butt" stroke-linejoin="round"/><polyline points="789.4,231.1 798.2,231.2" fill="none" stroke="#272727" stroke-width="6.5" stroke-linecap="butt" stroke-linejoin="round"/><polyline points="797.0,230.7 806.2,230.8" fill="none" stroke="#2d2d2d" stroke-width="6.5" stroke-linecap="butt" stroke-linejoin="round"/><polyline points="805.0,231.7 810.6,231.8" fill="none" stroke="#2f2f2f" stroke-width="6.5" stroke-linecap="butt" stroke-linejoin="round"/><polyline points="809.4,230.7 814.6,230.7" fill="none" stroke="#2e2e2e" stroke-width="6.5" stroke-linecap="butt" stroke-linejoin="round"/><polyline points="813.4,230.9 819.5,231.0" fill="none" stroke="#2e2e2e" stroke-width="6.5" stroke-linecap="butt" stroke-linejoin="round"/><polyline points="818.3,231.6 827.0,231.7" fill="none" stroke="#272727" stroke-width="6.5" stroke-linecap="butt" stroke-linejoin="round"/><polyline points="825.8,231.4 834.1,231.5" fill="none" stroke="#303030" stroke-width="6.5" stroke-linecap="butt" stroke-linejoin="round"/><polyline points="832.9,231.4 841.6,231.5" fill="none" stroke="#313131" stroke-width="6.5" stroke-linecap="butt" stroke-linejoin="round"/><polyline points="840.4,231.0 847.6,231.1" fill="none" stroke="#333333" stroke-width="6.5" stroke-linecap="butt" stroke-linejoin="round"/><polyline points="846.4,231.5 855.4,231.6" fill="none" stroke="#272727" stroke-width="6.5" stroke-linecap="butt" stroke-linejoin="round"/><polyline points="854.2,231.4 860.8,231.5" fill="none" stroke="#2a2a2a" stroke-width="6.5" stroke-linecap="butt" stroke-linejoin="round"/><polyline points="859.6,232.0 864.4,232.1" fill="none" stroke="#2b2b2b" stroke-width="6.5" stroke-linecap="butt" stroke-linejoin="round"/><polyline points="863.2,232.4 868.6,232.4" fill="none" stroke="#313131" stroke-width="6.5" stroke-linecap="butt" stroke-linejoin="round"/><polyline points="867.4,232.4 873.7,232.5" fill="none" stroke="#2a2a2a" stroke-width="6.5" stroke-linecap="butt" stroke-linejoin="round"/><polyline points="872.5,232.8 877.6,232.8" fill="none" stroke="#333333" stroke-width="6.5" stroke-linecap="butt" stroke-linejoin="round"/><polyline points="876.4,232.3 883.7,232.3" fill="none" stroke="#2d2d2d" stroke-width="6.5" stroke-linecap="butt" stroke-linejoin="round"/><polyline points="882.5,231.8 891.9,231.9" fill="none" stroke="#272727" stroke-width="6.5" stroke-linecap="butt" stroke-linejoin="round"/><polyline points="890.7,232.9 896.7,233.0" fill="none" stroke="#242424" stroke-width="6.5" stroke-linecap="butt" stroke-linejoin="round"/><polyline points="895.5,232.0 903.7,232.2" fill="none" stroke="#242424" stroke-width="6.5" stroke-linecap="butt" stroke-linejoin="round"/><polyline points="902.5,232.7 910.0,233.0" fill="none" stroke="#2f2f2f" stroke-width="6.5" stroke-linecap="butt" stroke-linejoin="round"/><polyline points="908.8,233.3 917.8,233.7" fill="none" stroke="#252525" stroke-width="6.5" stroke-linecap="butt" stroke-linejoin="round"/><polyline points="916.6,233.4 923.8,233.7" fill="none" stroke="#282828" stroke-width="6.5" stroke-linecap="butt" stroke-linejoin="round"/><polyline points="922.6,233.1 929.3,233.4" fill="none" stroke="#2d2d2d" stroke-width="6.5" stroke-linecap="butt" stroke-linejoin="round"/><polyline points="928.1,234.1 933.6,234.3" fill="none" stroke="#303030" stroke-width="6.5" stroke-linecap="butt" stroke-linejoin="round"/><polyline points="932.4,234.9 941.2,235.2" fill="none" stroke="#2a2a2a" stroke-width="6.5" stroke-linecap="butt" stroke-linejoin="round"/><polyline points="940.0,234.6 948.8,235.0" fill="none" stroke="#2a2a2a" stroke-width="6.5" stroke-linecap="butt" stroke-linejoin="round"/><polyline points="947.6,234.7 956.1,235.0" fill="none" stroke="#282828" stroke-width="6.5" stroke-linecap="butt" stroke-linejoin="round"/><polyline points="954.9,236.0 960.6,236.3" fill="none" stroke="#313131" stroke-width="6.5" stroke-linecap="butt" stroke-linejoin="round"/><ellipse cx="884.0" cy="233.0" rx="9.0" ry="6.0" fill="#181818"/><ellipse cx="935.0" cy="236.0" rx="12.0" ry="6.0" fill="#282828"/><ellipse cx="978.0" cy="238.5" rx="8.0" ry="5.0" fill="#2a2a2a"/><polyline points="800.0,246.0 800.0,262.0" fill="none" stroke="#9e9e9e" stroke-width="4.0" stroke-linecap="butt" stroke-linejoin="round"/><polyline points="807.0,244.0 807.0,268.0" fill="none" stroke="#9e9e9e" stroke-width="4.0" stroke-linecap="butt" stroke-linejoin="round"/><polyline points="815.0,246.0 815.0,264.0" fill="none" stroke="#9e9e9e" stroke-width="4.0" stroke-linecap="butt" stroke-linejoin="round"/><polyline points="852.0,240.0 852.0,256.0" fill="none" stroke="#9e9e9e" stroke-width="4.0" stroke-linecap="butt" stroke-linejoin="round"/><polyline points="808.0,305.0 830.0,311.0" fill="none" stroke="#565656" stroke-width="5.0" stroke-linecap="butt" stroke-linejoin="round"/><ellipse cx="1515.0" cy="234.0" rx="16.0" ry="4.0" fill="#a5a5a5"/><polyline points="1490.0,256.0 1505.0,248.0 1522.0,246.5 1535.0,250.0 1548.0,262.0" fill="none" stroke="#505050" stroke-width="7.0" stroke-linecap="butt" stroke-linejoin="round"/></g>
<g filter="url(#bl1_8)"><polyline points="249.4,233.8 259.0,233.8" fill="none" stroke="#b3b3b3" stroke-width="8.0" stroke-linecap="butt" stroke-linejoin="round"/><polyline points="257.8,233.8 263.5,233.8" fill="none" stroke="#b5b5b5" stroke-width="8.0" stroke-linecap="butt" stroke-linejoin="round"/><polyline points="262.3,233.8 271.5,233.8" fill="none" stroke="#b2b2b2" stroke-width="8.0" stroke-linecap="butt" stroke-linejoin="round"/><polyline points="270.3,233.6 278.3,233.6" fill="none" stroke="#bababa" stroke-width="8.0" stroke-linecap="butt" stroke-linejoin="round"/><polyline points="277.1,234.4 288.0,234.4" fill="none" stroke="#a8a8a8" stroke-width="8.0" stroke-linecap="butt" stroke-linejoin="round"/><polyline points="286.8,234.5 296.6,234.5" fill="none" stroke="#b1b1b1" stroke-width="8.0" stroke-linecap="butt" stroke-linejoin="round"/><polyline points="294.4,181.9 300.2,181.9" fill="none" stroke="#2d2d2d" stroke-width="8.5" stroke-linecap="butt" stroke-linejoin="round"/><polyline points="299.0,181.5 304.5,181.5" fill="none" stroke="#393939" stroke-width="8.5" stroke-linecap="butt" stroke-linejoin="round"/><polyline points="303.3,181.5 312.0,181.5" fill="none" stroke="#383838" stroke-width="8.5" stroke-linecap="butt" stroke-linejoin="round"/><polyline points="310.8,181.9 316.7,181.9" fill="none" stroke="#323232" stroke-width="8.5" stroke-linecap="butt" stroke-linejoin="round"/><polyline points="315.5,181.5 320.4,181.5" fill="none" stroke="#313131" stroke-width="8.5" stroke-linecap="butt" stroke-linejoin="round"/><polyline points="319.2,181.3 324.6,181.3" fill="none" stroke="#2f2f2f" stroke-width="8.5" stroke-linecap="butt" stroke-linejoin="round"/><polyline points="323.4,181.8 328.2,181.8" fill="none" stroke="#373737" stroke-width="8.5" stroke-linecap="butt" stroke-linejoin="round"/><polyline points="327.0,181.7 333.6,181.7" fill="none" stroke="#383838" stroke-width="8.5" stroke-linecap="butt" stroke-linejoin="round"/><polyline points="371.5,233.0 371.5,258.0" fill="none" stroke="#d2d2d2" stroke-width="4.2" stroke-linecap="butt" stroke-linejoin="round"/><polyline points="662.0,226.5 674.0,219.5 688.0,215.5" fill="none" stroke="#505050" stroke-width="6.0" stroke-linecap="butt" stroke-linejoin="round"/><polyline points="657.0,250.0 665.0,244.5 675.0,240.0 687.0,237.5 699.0,240.5 710.0,246.0" fill="none" stroke="#343434" stroke-width="6.0" stroke-linecap="butt" stroke-linejoin="round"/><polyline points="744.0,280.0 752.0,278.5 761.0,283.0" fill="none" stroke="#464646" stroke-width="5.0" stroke-linecap="butt" stroke-linejoin="round"/><polyline points="877.0,226.0 877.0,246.0" fill="none" stroke="#141414" stroke-width="6.0" stroke-linecap="butt" stroke-linejoin="round"/><polyline points="833.0,297.0 865.0,294.0 896.0,293.0" fill="none" stroke="#545454" stroke-width="5.0" stroke-linecap="butt" stroke-linejoin="round"/><polyline points="871.0,320.0 890.0,317.0" fill="none" stroke="#545454" stroke-width="4.0" stroke-linecap="butt" stroke-linejoin="round"/><polyline points="999.4,210.3 1013.1,210.4" fill="none" stroke="#4c4c4c" stroke-width="6.5" stroke-linecap="butt" stroke-linejoin="round"/><polyline points="1011.9,210.5 1026.8,210.5" fill="none" stroke="#4d4d4d" stroke-width="6.5" stroke-linecap="butt" stroke-linejoin="round"/><polyline points="1025.6,210.0 1037.8,210.0" fill="none" stroke="#505050" stroke-width="6.5" stroke-linecap="butt" stroke-linejoin="round"/><polyline points="1036.6,210.2 1047.3,210.2" fill="none" stroke="#4b4b4b" stroke-width="6.5" stroke-linecap="butt" stroke-linejoin="round"/><polyline points="1046.1,210.5 1061.1,210.5" fill="none" stroke="#545454" stroke-width="6.5" stroke-linecap="butt" stroke-linejoin="round"/><polyline points="1059.9,210.6 1073.5,210.7" fill="none" stroke="#545454" stroke-width="6.5" stroke-linecap="butt" stroke-linejoin="round"/><polyline points="1072.3,210.1 1084.7,210.1" fill="none" stroke="#525252" stroke-width="6.5" stroke-linecap="butt" stroke-linejoin="round"/><polyline points="1083.5,210.8 1095.0,210.8" fill="none" stroke="#515151" stroke-width="6.5" stroke-linecap="butt" stroke-linejoin="round"/><polyline points="1093.8,210.3 1105.2,210.4" fill="none" stroke="#555555" stroke-width="6.5" stroke-linecap="butt" stroke-linejoin="round"/><polyline points="1104.0,210.6 1113.6,210.6" fill="none" stroke="#4c4c4c" stroke-width="6.5" stroke-linecap="butt" stroke-linejoin="round"/><polyline points="1112.4,210.5 1127.3,210.5" fill="none" stroke="#4e4e4e" stroke-width="6.5" stroke-linecap="butt" stroke-linejoin="round"/><polyline points="1126.1,210.2 1137.5,210.2" fill="none" stroke="#4c4c4c" stroke-width="6.5" stroke-linecap="butt" stroke-linejoin="round"/><polyline points="1136.3,210.5 1145.9,210.5" fill="none" stroke="#4e4e4e" stroke-width="6.5" stroke-linecap="butt" stroke-linejoin="round"/><polyline points="1144.7,210.7 1152.6,210.7" fill="none" stroke="#535353" stroke-width="6.5" stroke-linecap="butt" stroke-linejoin="round"/><polyline points="1151.4,210.8 1163.1,210.8" fill="none" stroke="#4d4d4d" stroke-width="6.5" stroke-linecap="butt" stroke-linejoin="round"/><polyline points="1161.9,210.7 1172.8,210.8" fill="none" stroke="#515151" stroke-width="6.5" stroke-linecap="butt" stroke-linejoin="round"/><polyline points="1171.6,210.5 1181.3,210.5" fill="none" stroke="#4d4d4d" stroke-width="6.5" stroke-linecap="butt" stroke-linejoin="round"/><polyline points="1180.1,210.8 1190.4,210.9" fill="none" stroke="#4b4b4b" stroke-width="6.5" stroke-linecap="butt" stroke-linejoin="round"/><polyline points="1189.2,210.5 1203.3,210.6" fill="none" stroke="#515151" stroke-width="6.5" stroke-linecap="butt" stroke-linejoin="round"/><polyline points="1202.1,211.3 1211.6,211.4" fill="none" stroke="#4e4e4e" stroke-width="6.5" stroke-linecap="butt" stroke-linejoin="round"/><polyline points="1210.4,210.4 1218.8,210.5" fill="none" stroke="#545454" stroke-width="6.5" stroke-linecap="butt" stroke-linejoin="round"/><polyline points="1217.6,210.8 1225.3,210.8" fill="none" stroke="#4f4f4f" stroke-width="6.5" stroke-linecap="butt" stroke-linejoin="round"/><polyline points="1224.1,210.7 1232.2,210.7" fill="none" stroke="#555555" stroke-width="6.5" stroke-linecap="butt" stroke-linejoin="round"/><polyline points="1231.0,210.8 1239.4,210.8" fill="none" stroke="#4f4f4f" stroke-width="6.5" stroke-linecap="butt" stroke-linejoin="round"/><polyline points="1238.2,211.3 1250.4,211.1" fill="none" stroke="#535353" stroke-width="6.5" stroke-linecap="butt" stroke-linejoin="round"/><polyline points="1249.2,211.0 1262.3,210.7" fill="none" stroke="#535353" stroke-width="6.5" stroke-linecap="butt" stroke-linejoin="round"/><polyline points="1261.1,210.7 1274.6,210.4" fill="none" stroke="#545454" stroke-width="6.5" stroke-linecap="butt" stroke-linejoin="round"/><polyline points="1273.4,209.7 1287.5,209.4" fill="none" stroke="#535353" stroke-width="6.5" stroke-linecap="butt" stroke-linejoin="round"/><polyline points="1286.3,210.3 1297.5,210.1" fill="none" stroke="#515151" stroke-width="6.5" stroke-linecap="butt" stroke-linejoin="round"/><polyline points="1296.3,210.0 1309.8,209.7" fill="none" stroke="#515151" stroke-width="6.5" stroke-linecap="butt" stroke-linejoin="round"/><polyline points="1308.6,209.3 1319.4,209.1" fill="none" stroke="#525252" stroke-width="6.5" stroke-linecap="butt" stroke-linejoin="round"/><polyline points="1318.2,209.2 1328.5,209.0" fill="none" stroke="#4f4f4f" stroke-width="6.5" stroke-linecap="butt" stroke-linejoin="round"/><polyline points="1327.3,209.3 1340.8,209.0" fill="none" stroke="#505050" stroke-width="6.5" stroke-linecap="butt" stroke-linejoin="round"/><polyline points="1339.6,208.4 1348.3,208.2" fill="none" stroke="#4c4c4c" stroke-width="6.5" stroke-linecap="butt" stroke-linejoin="round"/><polyline points="1347.1,208.0 1358.9,207.8" fill="none" stroke="#545454" stroke-width="6.5" stroke-linecap="butt" stroke-linejoin="round"/><polyline points="1357.7,208.5 1371.7,208.2" fill="none" stroke="#555555" stroke-width="6.5" stroke-linecap="butt" stroke-linejoin="round"/><polyline points="1370.5,208.3 1381.1,208.1" fill="none" stroke="#4b4b4b" stroke-width="6.5" stroke-linecap="butt" stroke-linejoin="round"/><polyline points="1379.9,207.7 1390.6,207.4" fill="none" stroke="#545454" stroke-width="6.5" stroke-linecap="butt" stroke-linejoin="round"/></g>
<g filter="url(#bl1_7)"><polyline points="785.4,206.4 794.4,205.6" fill="none" stroke="#4c4c4c" stroke-width="7.0" stroke-linecap="butt" stroke-linejoin="round"/><polyline points="793.2,204.8 806.2,204.7" fill="none" stroke="#4e4e4e" stroke-width="7.0" stroke-linecap="butt" stroke-linejoin="round"/><polyline points="805.0,205.4 814.1,205.6" fill="none" stroke="#4b4b4b" stroke-width="7.0" stroke-linecap="butt" stroke-linejoin="round"/><polyline points="812.9,205.6 823.3,205.9" fill="none" stroke="#494949" stroke-width="7.0" stroke-linecap="butt" stroke-linejoin="round"/><polyline points="822.1,205.7 831.7,206.0" fill="none" stroke="#4f4f4f" stroke-width="7.0" stroke-linecap="butt" stroke-linejoin="round"/><polyline points="830.5,205.9 843.1,206.2" fill="none" stroke="#4c4c4c" stroke-width="7.0" stroke-linecap="butt" stroke-linejoin="round"/><polyline points="841.9,206.7 852.1,207.0" fill="none" stroke="#4e4e4e" stroke-width="7.0" stroke-linecap="butt" stroke-linejoin="round"/><polyline points="850.9,206.5 859.9,206.7" fill="none" stroke="#4a4a4a" stroke-width="7.0" stroke-linecap="butt" stroke-linejoin="round"/><polyline points="858.7,207.1 869.9,207.4" fill="none" stroke="#474747" stroke-width="7.0" stroke-linecap="butt" stroke-linejoin="round"/><polyline points="868.7,207.2 881.6,207.6" fill="none" stroke="#474747" stroke-width="7.0" stroke-linecap="butt" stroke-linejoin="round"/><polyline points="880.4,207.3 887.1,207.5" fill="none" stroke="#505050" stroke-width="7.0" stroke-linecap="butt" stroke-linejoin="round"/><polyline points="885.9,208.0 897.2,208.3" fill="none" stroke="#505050" stroke-width="7.0" stroke-linecap="butt" stroke-linejoin="round"/><polyline points="896.0,208.2 907.1,208.5" fill="none" stroke="#4e4e4e" stroke-width="7.0" stroke-linecap="butt" stroke-linejoin="round"/><polyline points="905.9,208.2 917.4,208.5" fill="none" stroke="#4e4e4e" stroke-width="7.0" stroke-linecap="butt" stroke-linejoin="round"/><polyline points="916.2,208.4 928.3,208.8" fill="none" stroke="#494949" stroke-width="7.0" stroke-linecap="butt" stroke-linejoin="round"/><polyline points="927.1,209.5 939.2,209.6" fill="none" stroke="#4e4e4e" stroke-width="7.0" stroke-linecap="butt" stroke-linejoin="round"/><polyline points="938.0,209.5 950.6,209.6" fill="none" stroke="#4d4d4d" stroke-width="7.0" stroke-linecap="butt" stroke-linejoin="round"/><polyline points="949.4,209.3 958.1,209.4" fill="none" stroke="#4a4a4a" stroke-width="7.0" stroke-linecap="butt" stroke-linejoin="round"/><polyline points="956.9,209.8 968.2,209.9" fill="none" stroke="#484848" stroke-width="7.0" stroke-linecap="butt" stroke-linejoin="round"/><polyline points="967.0,209.3 973.8,209.3" fill="none" stroke="#4f4f4f" stroke-width="7.0" stroke-linecap="butt" stroke-linejoin="round"/><polyline points="972.6,209.6 985.8,209.7" fill="none" stroke="#474747" stroke-width="7.0" stroke-linecap="butt" stroke-linejoin="round"/><polyline points="984.6,210.1 995.5,210.2" fill="none" stroke="#515151" stroke-width="7.0" stroke-linecap="butt" stroke-linejoin="round"/><polyline points="994.3,209.5 1000.6,209.6" fill="none" stroke="#4d4d4d" stroke-width="7.0" stroke-linecap="butt" stroke-linejoin="round"/></g>
<g filter="url(#bl1_6)"><polyline points="332.4,182.2 341.7,182.8" fill="none" stroke="#555555" stroke-width="5.5" stroke-linecap="butt" stroke-linejoin="round"/><polyline points="340.5,182.9 349.7,183.4" fill="none" stroke="#4e4e4e" stroke-width="5.5" stroke-linecap="butt" stroke-linejoin="round"/><polyline points="348.5,183.8 355.8,184.2" fill="none" stroke="#4e4e4e" stroke-width="5.5" stroke-linecap="butt" stroke-linejoin="round"/><polyline points="354.6,183.8 363.0,184.3" fill="none" stroke="#505050" stroke-width="5.5" stroke-linecap="butt" stroke-linejoin="round"/><polyline points="361.8,184.8 371.1,185.4" fill="none" stroke="#545454" stroke-width="5.5" stroke-linecap="butt" stroke-linejoin="round"/><polyline points="369.9,185.4 381.0,186.1" fill="none" stroke="#545454" stroke-width="5.5" stroke-linecap="butt" stroke-linejoin="round"/><polyline points="379.8,185.4 391.6,186.2" fill="none" stroke="#525252" stroke-width="5.5" stroke-linecap="butt" stroke-linejoin="round"/><polyline points="390.4,186.7 402.4,187.5" fill="none" stroke="#4e4e4e" stroke-width="5.5" stroke-linecap="butt" stroke-linejoin="round"/><polyline points="401.2,187.1 414.5,188.0" fill="none" stroke="#505050" stroke-width="5.5" stroke-linecap="butt" stroke-linejoin="round"/><polyline points="413.3,188.5 422.1,189.0" fill="none" stroke="#555555" stroke-width="5.5" stroke-linecap="butt" stroke-linejoin="round"/><polyline points="420.9,188.7 432.2,189.4" fill="none" stroke="#515151" stroke-width="5.5" stroke-linecap="butt" stroke-linejoin="round"/><polyline points="431.0,189.3 438.8,189.8" fill="none" stroke="#4d4d4d" stroke-width="5.5" stroke-linecap="butt" stroke-linejoin="round"/><polyline points="437.6,189.8 447.8,190.5" fill="none" stroke="#545454" stroke-width="5.5" stroke-linecap="butt" stroke-linejoin="round"/><polyline points="446.6,190.4 456.4,191.1" fill="none" stroke="#4d4d4d" stroke-width="5.5" stroke-linecap="butt" stroke-linejoin="round"/><polyline points="455.2,191.0 464.3,191.6" fill="none" stroke="#4d4d4d" stroke-width="5.5" stroke-linecap="butt" stroke-linejoin="round"/><polyline points="463.1,192.2 473.8,192.9" fill="none" stroke="#525252" stroke-width="5.5" stroke-linecap="butt" stroke-linejoin="round"/><polyline points="472.6,192.6 482.1,193.3" fill="none" stroke="#4f4f4f" stroke-width="5.5" stroke-linecap="butt" stroke-linejoin="round"/><polyline points="480.9,193.1 488.0,193.5" fill="none" stroke="#555555" stroke-width="5.5" stroke-linecap="butt" stroke-linejoin="round"/><polyline points="486.8,193.8 497.0,194.4" fill="none" stroke="#545454" stroke-width="5.5" stroke-linecap="butt" stroke-linejoin="round"/><polyline points="495.8,194.1 504.4,194.7" fill="none" stroke="#4f4f4f" stroke-width="5.5" stroke-linecap="butt" stroke-linejoin="round"/><polyline points="503.2,195.2 504.6,195.2" fill="none" stroke="#545454" stroke-width="5.5" stroke-linecap="butt" stroke-linejoin="round"/><polyline points="341.0,242.0 341.0,256.0" fill="none" stroke="#aaaaaa" stroke-width="4.0" stroke-linecap="butt" stroke-linejoin="round"/><polyline points="503.4,195.9 510.1,196.3" fill="none" stroke="#525252" stroke-width="5.0" stroke-linecap="butt" stroke-linejoin="round"/><polyline points="508.9,196.2 520.1,197.0" fill="none" stroke="#555555" stroke-width="5.0" stroke-linecap="butt" stroke-linejoin="round"/><polyline points="518.9,197.3 527.3,197.9" fill="none" stroke="#4e4e4e" stroke-width="5.0" stroke-linecap="butt" stroke-linejoin="round"/><polyline points="526.1,197.5 535.6,198.1" fill="none" stroke="#4e4e4e" stroke-width="5.0" stroke-linecap="butt" stroke-linejoin="round"/><polyline points="534.4,198.3 541.1,198.7" fill="none" stroke="#565656" stroke-width="5.0" stroke-linecap="butt" stroke-linejoin="round"/><polyline points="539.9,198.8 548.0,199.3" fill="none" stroke="#525252" stroke-width="5.0" stroke-linecap="butt" stroke-linejoin="round"/><polyline points="546.8,199.0 559.2,199.9" fill="none" stroke="#505050" stroke-width="5.0" stroke-linecap="butt" stroke-linejoin="round"/><polyline points="558.0,200.4 565.0,200.8" fill="none" stroke="#545454" stroke-width="5.0" stroke-linecap="butt" stroke-linejoin="round"/><polyline points="563.8,200.8 570.4,201.2" fill="none" stroke="#545454" stroke-width="5.0" stroke-linecap="butt" stroke-linejoin="round"/><polyline points="569.2,201.0 581.2,201.8" fill="none" stroke="#505050" stroke-width="5.0" stroke-linecap="butt" stroke-linejoin="round"/><polyline points="580.0,201.6 585.6,201.9" fill="none" stroke="#515151" stroke-width="5.0" stroke-linecap="butt" stroke-linejoin="round"/><polyline points="1389.4,207.7 1400.9,207.5" fill="none" stroke="#484848" stroke-width="6.5" stroke-linecap="butt" stroke-linejoin="round"/><polyline points="1399.7,207.1 1412.4,207.1" fill="none" stroke="#474747" stroke-width="6.5" stroke-linecap="butt" stroke-linejoin="round"/><polyline points="1411.2,207.4 1421.2,207.3" fill="none" stroke="#494949" stroke-width="6.5" stroke-linecap="butt" stroke-linejoin="round"/><polyline points="1420.0,207.0 1428.0,206.9" fill="none" stroke="#474747" stroke-width="6.5" stroke-linecap="butt" stroke-linejoin="round"/><polyline points="1426.8,207.2 1438.6,207.2" fill="none" stroke="#4c4c4c" stroke-width="6.5" stroke-linecap="butt" stroke-linejoin="round"/><polyline points="1437.4,207.0 1448.1,206.9" fill="none" stroke="#4c4c4c" stroke-width="6.5" stroke-linecap="butt" stroke-linejoin="round"/><polyline points="1446.9,207.1 1458.3,207.0" fill="none" stroke="#454545" stroke-width="6.5" stroke-linecap="butt" stroke-linejoin="round"/><polyline points="1457.1,207.0 1472.2,206.9" fill="none" stroke="#484848" stroke-width="6.5" stroke-linecap="butt" stroke-linejoin="round"/><polyline points="1471.0,206.8 1485.3,206.7" fill="none" stroke="#4b4b4b" stroke-width="6.5" stroke-linecap="butt" stroke-linejoin="round"/><polyline points="1484.1,206.6 1498.4,206.5" fill="none" stroke="#454545" stroke-width="6.5" stroke-linecap="butt" stroke-linejoin="round"/><polyline points="1497.2,206.5 1508.5,206.4" fill="none" stroke="#464646" stroke-width="6.5" stroke-linecap="butt" stroke-linejoin="round"/><polyline points="1507.3,206.5 1519.6,206.4" fill="none" stroke="#474747" stroke-width="6.5" stroke-linecap="butt" stroke-linejoin="round"/><polyline points="1518.4,206.1 1530.7,206.0" fill="none" stroke="#474747" stroke-width="6.5" stroke-linecap="butt" stroke-linejoin="round"/><polyline points="1529.5,206.4 1539.1,206.3" fill="none" stroke="#444444" stroke-width="6.5" stroke-linecap="butt" stroke-linejoin="round"/><polyline points="1537.9,206.3 1551.9,206.2" fill="none" stroke="#494949" stroke-width="6.5" stroke-linecap="butt" stroke-linejoin="round"/><polyline points="1550.7,206.2 1561.8,206.1" fill="none" stroke="#464646" stroke-width="6.5" stroke-linecap="butt" stroke-linejoin="round"/><polyline points="1560.6,206.4 1572.1,206.3" fill="none" stroke="#494949" stroke-width="6.5" stroke-linecap="butt" stroke-linejoin="round"/><polyline points="1570.9,205.8 1579.1,205.7" fill="none" stroke="#4a4a4a" stroke-width="6.5" stroke-linecap="butt" stroke-linejoin="round"/><polyline points="1577.9,205.7 1585.9,205.7" fill="none" stroke="#484848" stroke-width="6.5" stroke-linecap="butt" stroke-linejoin="round"/><polyline points="1584.7,206.1 1596.8,206.0" fill="none" stroke="#444444" stroke-width="6.5" stroke-linecap="butt" stroke-linejoin="round"/><polyline points="1595.6,205.7 1598.6,205.7" fill="none" stroke="#4a4a4a" stroke-width="6.5" stroke-linecap="butt" stroke-linejoin="round"/><polyline points="1019.4,233.2 1031.7,233.2" fill="none" stroke="#585858" stroke-width="4.5" stroke-linecap="butt" stroke-linejoin="round"/><polyline points="1030.5,233.4 1050.5,233.4" fill="none" stroke="#565656" stroke-width="4.5" stroke-linecap="butt" stroke-linejoin="round"/><polyline points="1049.3,233.6 1060.5,233.6" fill="none" stroke="#575757" stroke-width="4.5" stroke-linecap="butt" stroke-linejoin="round"/><polyline points="1059.3,233.8 1075.1,233.8" fill="none" stroke="#555555" stroke-width="4.5" stroke-linecap="butt" stroke-linejoin="round"/><polyline points="1073.9,233.5 1090.2,233.5" fill="none" stroke="#5a5a5a" stroke-width="4.5" stroke-linecap="butt" stroke-linejoin="round"/><polyline points="1089.0,233.3 1099.9,233.3" fill="none" stroke="#575757" stroke-width="4.5" stroke-linecap="butt" stroke-linejoin="round"/><polyline points="1098.7,233.3 1108.9,233.3" fill="none" stroke="#565656" stroke-width="4.5" stroke-linecap="butt" stroke-linejoin="round"/><polyline points="1107.7,233.1 1122.4,233.1" fill="none" stroke="#575757" stroke-width="4.5" stroke-linecap="butt" stroke-linejoin="round"/><polyline points="1121.2,233.2 1134.8,233.2" fill="none" stroke="#555555" stroke-width="4.5" stroke-linecap="butt" stroke-linejoin="round"/><polyline points="1133.6,233.8 1154.3,233.8" fill="none" stroke="#555555" stroke-width="4.5" stroke-linecap="butt" stroke-linejoin="round"/><polyline points="1153.1,233.6 1173.7,233.6" fill="none" stroke="#555555" stroke-width="4.5" stroke-linecap="butt" stroke-linejoin="round"/><polyline points="1172.5,233.2 1187.0,233.2" fill="none" stroke="#585858" stroke-width="4.5" stroke-linecap="butt" stroke-linejoin="round"/><polyline points="1185.8,233.6 1205.7,233.6" fill="none" stroke="#595959" stroke-width="4.5" stroke-linecap="butt" stroke-linejoin="round"/><polyline points="1204.5,233.3 1221.4,233.3" fill="none" stroke="#565656" stroke-width="4.5" stroke-linecap="butt" stroke-linejoin="round"/><polyline points="1220.2,233.8 1230.1,233.8" fill="none" stroke="#5b5b5b" stroke-width="4.5" stroke-linecap="butt" stroke-linejoin="round"/><polyline points="1228.9,233.6 1240.6,233.6" fill="none" stroke="#5b5b5b" stroke-width="4.5" stroke-linecap="butt" stroke-linejoin="round"/><polyline points="1239.4,233.8 1250.9,233.8" fill="none" stroke="#5b5b5b" stroke-width="4.5" stroke-linecap="butt" stroke-linejoin="round"/><polyline points="1249.7,233.2 1260.6,233.2" fill="none" stroke="#5b5b5b" stroke-width="4.5" stroke-linecap="butt" stroke-linejoin="round"/><polyline points="1388.4,224.5 1398.5,224.4" fill="none" stroke="#474747" stroke-width="5.5" stroke-linecap="butt" stroke-linejoin="round"/><polyline points="1397.3,224.1 1406.5,224.0" fill="none" stroke="#494949" stroke-width="5.5" stroke-linecap="butt" stroke-linejoin="round"/><polyline points="1405.3,224.4 1419.0,224.2" fill="none" stroke="#4b4b4b" stroke-width="5.5" stroke-linecap="butt" stroke-linejoin="round"/><polyline points="1417.8,224.1 1429.0,224.0" fill="none" stroke="#454545" stroke-width="5.5" stroke-linecap="butt" stroke-linejoin="round"/><polyline points="1427.8,223.7 1439.6,223.6" fill="none" stroke="#4a4a4a" stroke-width="5.5" stroke-linecap="butt" stroke-linejoin="round"/><polyline points="1438.4,224.1 1449.2,224.0" fill="none" stroke="#454545" stroke-width="5.5" stroke-linecap="butt" stroke-linejoin="round"/><polyline points="1448.0,223.5 1458.7,223.4" fill="none" stroke="#4a4a4a" stroke-width="5.5" stroke-linecap="butt" stroke-linejoin="round"/><polyline points="1457.5,223.8 1471.4,223.6" fill="none" stroke="#4a4a4a" stroke-width="5.5" stroke-linecap="butt" stroke-linejoin="round"/><polyline points="1470.2,223.5 1479.7,223.4" fill="none" stroke="#484848" stroke-width="5.5" stroke-linecap="butt" stroke-linejoin="round"/><polyline points="1478.5,223.2 1488.4,223.1" fill="none" stroke="#494949" stroke-width="5.5" stroke-linecap="butt" stroke-linejoin="round"/><polyline points="1487.2,223.0 1501.6,222.8" fill="none" stroke="#464646" stroke-width="5.5" stroke-linecap="butt" stroke-linejoin="round"/><polyline points="1500.4,222.9 1512.1,223.2" fill="none" stroke="#464646" stroke-width="5.5" stroke-linecap="butt" stroke-linejoin="round"/><polyline points="1510.9,223.3 1520.7,223.5" fill="none" stroke="#4c4c4c" stroke-width="5.5" stroke-linecap="butt" stroke-linejoin="round"/><polyline points="1519.5,223.8 1533.6,224.1" fill="none" stroke="#4c4c4c" stroke-width="5.5" stroke-linecap="butt" stroke-linejoin="round"/><polyline points="1532.4,223.6 1546.1,223.9" fill="none" stroke="#494949" stroke-width="5.5" stroke-linecap="butt" stroke-linejoin="round"/><polyline points="1544.9,224.2 1554.5,224.4" fill="none" stroke="#4c4c4c" stroke-width="5.5" stroke-linecap="butt" stroke-linejoin="round"/><polyline points="1553.3,224.2 1565.7,224.5" fill="none" stroke="#474747" stroke-width="5.5" stroke-linecap="butt" stroke-linejoin="round"/><polyline points="1564.5,224.4 1571.9,224.6" fill="none" stroke="#494949" stroke-width="5.5" stroke-linecap="butt" stroke-linejoin="round"/><polyline points="1570.7,224.9 1578.6,225.0" fill="none" stroke="#474747" stroke-width="5.5" stroke-linecap="butt" stroke-linejoin="round"/><polyline points="1577.4,225.0 1582.6,225.0" fill="none" stroke="#494949" stroke-width="5.5" stroke-linecap="butt" stroke-linejoin="round"/></g>
<g filter="url(#bl1_5)"><polyline points="68.4,134.2 75.6,135.6" fill="none" stroke="#484848" stroke-width="9.5" stroke-linecap="butt" stroke-linejoin="round"/><polyline points="74.4,135.8 82.8,137.4" fill="none" stroke="#424242" stroke-width="9.5" stroke-linecap="butt" stroke-linejoin="round"/><polyline points="81.6,137.5 87.2,138.5" fill="none" stroke="#424242" stroke-width="9.5" stroke-linecap="butt" stroke-linejoin="round"/><polyline points="86.0,138.8 93.8,140.4" fill="none" stroke="#424242" stroke-width="9.5" stroke-linecap="butt" stroke-linejoin="round"/><polyline points="92.6,140.5 101.5,142.3" fill="none" stroke="#474747" stroke-width="9.5" stroke-linecap="butt" stroke-linejoin="round"/><polyline points="100.3,141.6 111.2,143.8" fill="none" stroke="#4a4a4a" stroke-width="9.5" stroke-linecap="butt" stroke-linejoin="round"/><polyline points="110.0,143.9 116.2,145.0" fill="none" stroke="#444444" stroke-width="9.5" stroke-linecap="butt" stroke-linejoin="round"/><polyline points="115.0,145.4 121.4,146.6" fill="none" stroke="#474747" stroke-width="9.5" stroke-linecap="butt" stroke-linejoin="round"/><polyline points="120.2,146.2 128.7,147.9" fill="none" stroke="#424242" stroke-width="9.5" stroke-linecap="butt" stroke-linejoin="round"/><polyline points="127.5,148.2 136.7,150.1" fill="none" stroke="#444444" stroke-width="9.5" stroke-linecap="butt" stroke-linejoin="round"/><polyline points="135.5,150.0 143.4,151.5" fill="none" stroke="#494949" stroke-width="9.5" stroke-linecap="butt" stroke-linejoin="round"/><polyline points="142.2,151.8 149.0,153.1" fill="none" stroke="#464646" stroke-width="9.5" stroke-linecap="butt" stroke-linejoin="round"/><polyline points="147.8,152.8 157.3,154.8" fill="none" stroke="#4b4b4b" stroke-width="9.5" stroke-linecap="butt" stroke-linejoin="round"/><polyline points="156.1,155.1 163.8,156.7" fill="none" stroke="#434343" stroke-width="9.5" stroke-linecap="butt" stroke-linejoin="round"/><polyline points="162.6,156.6 168.2,157.6" fill="none" stroke="#494949" stroke-width="9.5" stroke-linecap="butt" stroke-linejoin="round"/><polyline points="167.0,157.3 177.3,159.5" fill="none" stroke="#484848" stroke-width="9.5" stroke-linecap="butt" stroke-linejoin="round"/><polyline points="176.1,159.6 184.8,161.3" fill="none" stroke="#494949" stroke-width="9.5" stroke-linecap="butt" stroke-linejoin="round"/><polyline points="183.6,161.5 191.6,163.1" fill="none" stroke="#424242" stroke-width="9.5" stroke-linecap="butt" stroke-linejoin="round"/><polyline points="190.4,163.4 199.5,165.2" fill="none" stroke="#494949" stroke-width="9.5" stroke-linecap="butt" stroke-linejoin="round"/><polyline points="198.3,164.9 205.8,166.4" fill="none" stroke="#414141" stroke-width="9.5" stroke-linecap="butt" stroke-linejoin="round"/><polyline points="204.6,166.0 211.0,167.2" fill="none" stroke="#424242" stroke-width="9.5" stroke-linecap="butt" stroke-linejoin="round"/><polyline points="209.8,167.3 215.9,168.4" fill="none" stroke="#454545" stroke-width="9.5" stroke-linecap="butt" stroke-linejoin="round"/><polyline points="214.7,168.6 220.5,169.7" fill="none" stroke="#464646" stroke-width="9.5" stroke-linecap="butt" stroke-linejoin="round"/><polyline points="219.3,170.0 229.3,172.1" fill="none" stroke="#444444" stroke-width="9.5" stroke-linecap="butt" stroke-linejoin="round"/><polyline points="228.1,172.1 235.5,173.5" fill="none" stroke="#4b4b4b" stroke-width="9.5" stroke-linecap="butt" stroke-linejoin="round"/><polyline points="234.3,173.0 240.7,174.2" fill="none" stroke="#434343" stroke-width="9.5" stroke-linecap="butt" stroke-linejoin="round"/><polyline points="239.5,174.2 248.2,176.0" fill="none" stroke="#414141" stroke-width="9.5" stroke-linecap="butt" stroke-linejoin="round"/><polyline points="247.0,176.2 253.6,177.3" fill="none" stroke="#4b4b4b" stroke-width="9.5" stroke-linecap="butt" stroke-linejoin="round"/><polyline points="251.4,222.2 262.5,222.2" fill="none" stroke="#525252" stroke-width="5.0" stroke-linecap="butt" stroke-linejoin="round"/><polyline points="261.3,221.6 271.5,221.6" fill="none" stroke="#545454" stroke-width="5.0" stroke-linecap="butt" stroke-linejoin="round"/><polyline points="270.3,221.8 276.8,221.8" fill="none" stroke="#545454" stroke-width="5.0" stroke-linecap="butt" stroke-linejoin="round"/><polyline points="275.6,222.5 286.3,222.5" fill="none" stroke="#525252" stroke-width="5.0" stroke-linecap="butt" stroke-linejoin="round"/><polyline points="285.1,222.2 294.2,222.2" fill="none" stroke="#555555" stroke-width="5.0" stroke-linecap="butt" stroke-linejoin="round"/><polyline points="293.0,221.6 296.6,221.6" fill="none" stroke="#4e4e4e" stroke-width="5.0" stroke-linecap="butt" stroke-linejoin="round"/><polyline points="329.4,208.1 335.7,207.9" fill="none" stroke="#434343" stroke-width="5.0" stroke-linecap="butt" stroke-linejoin="round"/><polyline points="334.5,208.4 340.3,208.3" fill="none" stroke="#3a3a3a" stroke-width="5.0" stroke-linecap="butt" stroke-linejoin="round"/><polyline points="339.1,208.1 344.0,208.0" fill="none" stroke="#3b3b3b" stroke-width="5.0" stroke-linecap="butt" stroke-linejoin="round"/><polyline points="342.8,208.5 351.9,208.4" fill="none" stroke="#3a3a3a" stroke-width="5.0" stroke-linecap="butt" stroke-linejoin="round"/><polyline points="350.7,207.8 355.9,207.7" fill="none" stroke="#414141" stroke-width="5.0" stroke-linecap="butt" stroke-linejoin="round"/><polyline points="354.7,207.6 360.7,207.6" fill="none" stroke="#404040" stroke-width="5.0" stroke-linecap="butt" stroke-linejoin="round"/><polyline points="359.5,208.1 367.9,208.0" fill="none" stroke="#414141" stroke-width="5.0" stroke-linecap="butt" stroke-linejoin="round"/><polyline points="366.7,207.3 375.5,207.2" fill="none" stroke="#3f3f3f" stroke-width="5.0" stroke-linecap="butt" stroke-linejoin="round"/><polyline points="374.3,207.1 382.6,206.9" fill="none" stroke="#3a3a3a" stroke-width="5.0" stroke-linecap="butt" stroke-linejoin="round"/><polyline points="381.4,207.8 387.0,207.7" fill="none" stroke="#3f3f3f" stroke-width="5.0" stroke-linecap="butt" stroke-linejoin="round"/><polyline points="385.8,207.8 392.5,207.7" fill="none" stroke="#3e3e3e" stroke-width="5.0" stroke-linecap="butt" stroke-linejoin="round"/><polyline points="391.3,207.3 400.0,207.2" fill="none" stroke="#464646" stroke-width="5.0" stroke-linecap="butt" stroke-linejoin="round"/><polyline points="398.8,207.4 400.6,207.4" fill="none" stroke="#434343" stroke-width="5.0" stroke-linecap="butt" stroke-linejoin="round"/><polyline points="331.4,214.9 336.4,214.8" fill="none" stroke="#3c3c3c" stroke-width="5.0" stroke-linecap="butt" stroke-linejoin="round"/><polyline points="335.2,215.2 344.7,215.0" fill="none" stroke="#494949" stroke-width="5.0" stroke-linecap="butt" stroke-linejoin="round"/><polyline points="343.5,214.9 352.4,214.7" fill="none" stroke="#3e3e3e" stroke-width="5.0" stroke-linecap="butt" stroke-linejoin="round"/><polyline points="351.2,214.3 360.6,214.2" fill="none" stroke="#444444" stroke-width="5.0" stroke-linecap="butt" stroke-linejoin="round"/><polyline points="359.4,214.5 365.2,214.4" fill="none" stroke="#3c3c3c" stroke-width="5.0" stroke-linecap="butt" stroke-linejoin="round"/><polyline points="364.0,214.7 370.0,214.6" fill="none" stroke="#444444" stroke-width="5.0" stroke-linecap="butt" stroke-linejoin="round"/><polyline points="368.8,214.3 373.7,214.2" fill="none" stroke="#454545" stroke-width="5.0" stroke-linecap="butt" stroke-linejoin="round"/><polyline points="372.5,214.1 378.8,214.0" fill="none" stroke="#474747" stroke-width="5.0" stroke-linecap="butt" stroke-linejoin="round"/><polyline points="377.6,213.9 382.7,213.8" fill="none" stroke="#404040" stroke-width="5.0" stroke-linecap="butt" stroke-linejoin="round"/><polyline points="381.5,213.8 389.4,213.7" fill="none" stroke="#3d3d3d" stroke-width="5.0" stroke-linecap="butt" stroke-linejoin="round"/><polyline points="388.2,213.9 394.9,213.8" fill="none" stroke="#3f3f3f" stroke-width="5.0" stroke-linecap="butt" stroke-linejoin="round"/><polyline points="393.7,214.2 398.6,214.1" fill="none" stroke="#404040" stroke-width="5.0" stroke-linecap="butt" stroke-linejoin="round"/><polyline points="472.0,214.0 472.0,227.0" fill="none" stroke="#080808" stroke-width="5.0" stroke-linecap="butt" stroke-linejoin="round"/><polyline points="304.4,227.5 317.3,227.5" fill="none" stroke="#acacac" stroke-width="5.0" stroke-linecap="butt" stroke-linejoin="round"/><polyline points="316.1,227.5 323.4,227.5" fill="none" stroke="#acacac" stroke-width="5.0" stroke-linecap="butt" stroke-linejoin="round"/><polyline points="322.2,227.5 334.6,227.5" fill="none" stroke="#acacac" stroke-width="5.0" stroke-linecap="butt" stroke-linejoin="round"/><polyline points="333.4,227.5 338.6,227.5" fill="none" stroke="#acacac" stroke-width="5.0" stroke-linecap="butt" stroke-linejoin="round"/><polyline points="457.0,230.0 457.0,242.0" fill="none" stroke="#b4b4b4" stroke-width="3.0" stroke-linecap="butt" stroke-linejoin="round"/><polyline points="648.0,211.0 652.0,222.0" fill="none" stroke="#afafaf" stroke-width="5.0" stroke-linecap="butt" stroke-linejoin="round"/><polyline points="735.0,216.0 737.0,231.0" fill="none" stroke="#b9b9b9" stroke-width="5.0" stroke-linecap="butt" stroke-linejoin="round"/><polyline points="750.0,229.0 751.0,241.0" fill="none" stroke="#afafaf" stroke-width="4.0" stroke-linecap="butt" stroke-linejoin="round"/><polyline points="647.0,383.0 660.0,370.0 675.0,356.0 689.0,346.0 700.0,354.0 712.0,366.0 721.0,376.0" fill="none" stroke="#565656" stroke-width="3.0" stroke-linecap="butt" stroke-linejoin="round"/><ellipse cx="1092.0" cy="222.0" rx="5.0" ry="3.0" fill="#b4b4b4"/></g>
<g filter="url(#bl1_3)"><polyline points="1004.0,220.0 1004.0,230.0" fill="none" stroke="#bebebe" stroke-width="3.0" stroke-linecap="butt" stroke-linejoin="round"/></g>
<g filter="url(#bl1_2)"><polyline points="652.0,343.5 662.0,341.5 672.0,341.0" fill="none" stroke="#545454" stroke-width="2.5" stroke-linecap="butt" stroke-linejoin="round"/></g>
<g><rect x="60" y="196" width="234.6" height="600" fill="url(#leftg)" clip-path="url(#undersand)"/></g>
</g></g>
<polygon points="1578,613.5 1597,613.5 1597,668" fill="#ffffff" fill-opacity="0.035"/>
<polygon points="337,660 346,657.5 337,705" fill="#ffffff" fill-opacity="0.035"/>
<polygon points="70.0,195.5 252.0,238.0 294.6,238.0 294.6,232.0 315.0,227.8 336.0,226.0 333.0,547.2 297.0,553.4 294.7,559.6 254.8,559.6 70.0,517.2" fill="#ff8c00" fill-opacity="0.34"/>
<g clip-path="url(#sclip)">
<g filter="url(#bl3)"><line x1="258.0" y1="236.0" x2="258.0" y2="262.0" stroke="#8a7460" stroke-width="4.9" stroke-linecap="round" opacity="0.37"/><line x1="266.0" y1="236.0" x2="266.0" y2="274.0" stroke="#8a7460" stroke-width="5.6" stroke-linecap="round" opacity="0.48"/><line x1="275.0" y1="236.0" x2="275.0" y2="294.0" stroke="#8a7460" stroke-width="6.3" stroke-linecap="round" opacity="0.58"/><line x1="284.0" y1="236.0" x2="284.0" y2="304.0" stroke="#8a7460" stroke-width="7.0" stroke-linecap="round" opacity="0.61"/><line x1="291.0" y1="236.0" x2="291.0" y2="290.0" stroke="#8a7460" stroke-width="4.2" stroke-linecap="round" opacity="0.54"/><line x1="302.0" y1="232.0" x2="302.0" y2="294.0" stroke="#8a7460" stroke-width="5.6" stroke-linecap="round" opacity="0.54"/><line x1="309.0" y1="232.0" x2="309.0" y2="312.0" stroke="#8a7460" stroke-width="4.9" stroke-linecap="round" opacity="0.61"/><line x1="317.0" y1="232.0" x2="317.0" y2="284.0" stroke="#8a7460" stroke-width="4.2" stroke-linecap="round" opacity="0.41"/><line x1="326.0" y1="232.0" x2="326.0" y2="294.0" stroke="#8a7460" stroke-width="3.5" stroke-linecap="round" opacity="0.51"/><line x1="331.0" y1="236.0" x2="331.0" y2="279.0" stroke="#8a7460" stroke-width="2.8" stroke-linecap="round" opacity="0.34"/><line x1="146.0" y1="212.0" x2="146.0" y2="250.0" stroke="#86a07c" stroke-width="4.8" stroke-linecap="round" opacity="0.44"/><line x1="152.0" y1="214.0" x2="152.0" y2="258.0" stroke="#86a07c" stroke-width="5.6" stroke-linecap="round" opacity="0.48"/><line x1="160.0" y1="216.0" x2="160.0" y2="262.0" stroke="#86a07c" stroke-width="5.6" stroke-linecap="round" opacity="0.52"/><line x1="166.0" y1="216.0" x2="166.0" y2="255.0" stroke="#86a07c" stroke-width="4.0" stroke-linecap="round" opacity="0.40"/><line x1="100.0" y1="202.0" x2="100.0" y2="232.0" stroke="#86a07c" stroke-width="2.4" stroke-linecap="round" opacity="0.36"/><line x1="198.0" y1="228.0" x2="198.0" y2="246.0" stroke="#86a07c" stroke-width="2.4" stroke-linecap="round" opacity="0.28"/><line x1="83.0" y1="200.0" x2="83.0" y2="250.0" stroke="#86a07c" stroke-width="3.2" stroke-linecap="round" opacity="0.20"/><line x1="90.0" y1="204.0" x2="90.0" y2="262.0" stroke="#86a07c" stroke-width="3.2" stroke-linecap="round" opacity="0.20"/></g>
</g>
<g clip-path="url(#wclip)">
<rect x="290" y="170" width="1320" height="50" fill="#7eaf88"/>
<polyline points="720.0,206.9 730.0,205.8 740.0,204.7 750.0,203.5 760.0,202.4 770.0,201.3 780.0,200.1 790.0,199.0 800.0,198.3 810.0,198.6 820.0,199.0 830.0,199.3 840.0,199.6 850.0,200.0 860.0,200.3 870.0,200.6 880.0,200.9 890.0,201.3 900.0,201.6 910.0,201.9 920.0,202.3 930.0,202.6 940.0,202.7 950.0,202.8 960.0,202.9 970.0,203.0 980.0,203.1 990.0,203.2 1000.0,203.3 1010.0,203.3 1020.0,203.2 1030.0,203.2 1040.0,203.1 1050.0,203.1 1060.0,203.0 1070.0,203.0 1080.0,202.9 1090.0,202.9 1100.0,202.8 1110.0,202.8 1120.0,202.8 1130.0,202.7 1140.0,202.7 1150.0,202.6 1160.0,202.6 1170.0,202.5 1180.0,202.5 1190.0,202.4 1200.0,202.4 1210.0,202.3 1220.0,202.3 1230.0,202.2 1240.0,202.2 1250.0,202.1 1260.0,202.0 1270.0,202.0 1280.0,201.9 1290.0,201.8 1300.0,201.8 1310.0,201.7 1320.0,201.6 1330.0,201.5 1340.0,201.4 1350.0,201.4 1360.0,201.3 1370.0,201.2 1380.0,201.2 1390.0,201.1 1400.0,201.0 1410.0,201.0 1420.0,200.9 1430.0,200.9 1440.0,200.9 1450.0,200.8 1460.0,200.8 1470.0,200.8 1480.0,200.7 1490.0,200.7 1500.0,200.6 1510.0,200.6 1520.0,200.6 1530.0,200.5 1540.0,200.5 1550.0,200.5 1560.0,200.4 1570.0,200.4 1580.0,200.4 1590.0,200.3 1600.0,200.3" fill="none" stroke="#3eb6d2" stroke-width="7" filter="url(#bl2)"/>
<polygon points="640,198 687,198 740,198 770,201 687,214 630,201" fill="#40b2d0" filter="url(#bl3)"/>
<rect x="290" y="172" width="1320" height="5.8" fill="#8c878e"/>
<rect x="290" y="177.6" width="1320" height="10.6" fill="url(#wband)"/>
<rect x="290" y="177.6" width="175" height="10.6" fill="#3ac4e4" opacity="0.75" />
<g filter="url(#bl1)"><rect x="470.0" y="180.6" width="23.9" height="4.6" fill="#0458d0" opacity="0.65"/><rect x="518.8" y="180.6" width="6.4" height="4.6" fill="#0458d0" opacity="0.42"/><rect x="532.5" y="180.6" width="19.0" height="4.6" fill="#0458d0" opacity="0.69"/><rect x="573.1" y="180.6" width="6.9" height="4.6" fill="#0458d0" opacity="0.34"/><rect x="602.1" y="180.6" width="23.7" height="4.6" fill="#0458d0" opacity="0.45"/><rect x="640.2" y="180.6" width="10.1" height="4.6" fill="#0458d0" opacity="0.67"/><rect x="663.0" y="180.6" width="28.7" height="4.6" fill="#0458d0" opacity="0.56"/><rect x="697.3" y="180.6" width="14.6" height="4.6" fill="#0458d0" opacity="0.36"/><rect x="735.6" y="180.6" width="21.3" height="4.6" fill="#0458d0" opacity="0.27"/><rect x="764.6" y="180.6" width="15.4" height="4.6" fill="#0458d0" opacity="0.48"/><rect x="796.7" y="180.6" width="16.1" height="4.6" fill="#0458d0" opacity="0.43"/><rect x="816.9" y="180.6" width="21.1" height="4.6" fill="#0458d0" opacity="0.42"/><rect x="842.4" y="180.6" width="17.9" height="4.6" fill="#0458d0" opacity="0.74"/><rect x="865.4" y="180.6" width="9.8" height="4.6" fill="#0458d0" opacity="0.59"/><rect x="885.2" y="180.6" width="13.1" height="4.6" fill="#0458d0" opacity="0.50"/><rect x="908.0" y="180.6" width="20.8" height="4.6" fill="#0458d0" opacity="0.51"/><rect x="953.9" y="180.6" width="31.8" height="4.6" fill="#0458d0" opacity="0.27"/><rect x="1002.0" y="180.6" width="26.0" height="4.6" fill="#0458d0" opacity="0.69"/><rect x="1049.1" y="180.6" width="22.5" height="4.6" fill="#0458d0" opacity="0.57"/><rect x="1083.5" y="180.6" width="13.3" height="4.6" fill="#0458d0" opacity="0.65"/><rect x="1120.1" y="180.6" width="30.4" height="4.6" fill="#0458d0" opacity="0.59"/><rect x="1161.1" y="180.6" width="25.8" height="4.6" fill="#0458d0" opacity="0.62"/><rect x="1202.2" y="180.6" width="22.5" height="4.6" fill="#0458d0" opacity="0.43"/><rect x="1240.8" y="180.6" width="16.6" height="4.6" fill="#0458d0" opacity="0.28"/><rect x="1268.8" y="180.6" width="14.4" height="4.6" fill="#0458d0" opacity="0.74"/><rect x="1297.8" y="180.6" width="15.5" height="4.6" fill="#0458d0" opacity="0.37"/><rect x="1322.5" y="180.6" width="15.1" height="4.6" fill="#0458d0" opacity="0.32"/><rect x="1341.7" y="180.6" width="28.6" height="4.6" fill="#0458d0" opacity="0.48"/><rect x="1384.2" y="180.6" width="20.8" height="4.6" fill="#0458d0" opacity="0.40"/><rect x="1412.7" y="180.6" width="7.7" height="4.6" fill="#0458d0" opacity="0.40"/><rect x="1431.2" y="180.6" width="24.9" height="4.6" fill="#0458d0" opacity="0.53"/><rect x="1480.7" y="180.6" width="14.9" height="4.6" fill="#0458d0" opacity="0.71"/><rect x="1512.4" y="180.6" width="8.1" height="4.6" fill="#0458d0" opacity="0.34"/><rect x="1537.3" y="180.6" width="31.7" height="4.6" fill="#0458d0" opacity="0.43"/><rect x="1590.0" y="180.6" width="17.1" height="4.6" fill="#0458d0" opacity="0.68"/></g>
<rect x="300.0" y="175.6" width="5.9" height="1.6" fill="#8fc08a" opacity="0.4"/><rect x="350.0" y="175.6" width="4.7" height="1.6" fill="#8fc08a" opacity="0.4"/><rect x="374.3" y="175.6" width="3.1" height="1.6" fill="#8fc08a" opacity="0.4"/><rect x="394.8" y="175.6" width="4.6" height="1.6" fill="#8fc08a" opacity="0.4"/><rect x="437.0" y="175.6" width="4.3" height="1.6" fill="#8fc08a" opacity="0.4"/><rect x="467.0" y="175.6" width="4.2" height="1.6" fill="#8fc08a" opacity="0.4"/><rect x="505.1" y="175.6" width="8.2" height="1.6" fill="#8fc08a" opacity="0.4"/><rect x="545.0" y="175.6" width="4.2" height="1.6" fill="#8fc08a" opacity="0.4"/><rect x="588.4" y="175.6" width="8.8" height="1.6" fill="#8fc08a" opacity="0.4"/><rect x="626.4" y="175.6" width="3.5" height="1.6" fill="#8fc08a" opacity="0.4"/><rect x="672.8" y="175.6" width="8.3" height="1.6" fill="#8fc08a" opacity="0.4"/><rect x="700.5" y="175.6" width="3.8" height="1.6" fill="#8fc08a" opacity="0.4"/><rect x="722.0" y="175.6" width="6.2" height="1.6" fill="#8fc08a" opacity="0.4"/><rect x="771.0" y="175.6" width="6.8" height="1.6" fill="#8fc08a" opacity="0.4"/><rect x="821.9" y="175.6" width="4.3" height="1.6" fill="#8fc08a" opacity="0.4"/><rect x="849.0" y="175.6" width="7.5" height="1.6" fill="#8fc08a" opacity="0.4"/><rect x="889.0" y="175.6" width="5.4" height="1.6" fill="#8fc08a" opacity="0.4"/><rect x="930.1" y="175.6" width="5.0" height="1.6" fill="#8fc08a" opacity="0.4"/><rect x="946.4" y="175.6" width="5.5" height="1.6" fill="#8fc08a" opacity="0.4"/><rect x="962.2" y="175.6" width="6.8" height="1.6" fill="#8fc08a" opacity="0.4"/><rect x="989.6" y="175.6" width="6.0" height="1.6" fill="#8fc08a" opacity="0.4"/><rect x="1027.5" y="175.6" width="4.5" height="1.6" fill="#8fc08a" opacity="0.4"/><rect x="1060.1" y="175.6" width="3.1" height="1.6" fill="#8fc08a" opacity="0.4"/><rect x="1111.1" y="175.6" width="6.4" height="1.6" fill="#8fc08a" opacity="0.4"/><rect x="1164.6" y="175.6" width="3.3" height="1.6" fill="#8fc08a" opacity="0.4"/><rect x="1203.1" y="175.6" width="7.3" height="1.6" fill="#8fc08a" opacity="0.4"/><rect x="1230.3" y="175.6" width="3.6" height="1.6" fill="#8fc08a" opacity="0.4"/><rect x="1250.5" y="175.6" width="3.9" height="1.6" fill="#8fc08a" opacity="0.4"/><rect x="1295.2" y="175.6" width="3.5" height="1.6" fill="#8fc08a" opacity="0.4"/><rect x="1341.8" y="175.6" width="5.5" height="1.6" fill="#8fc08a" opacity="0.4"/><rect x="1377.3" y="175.6" width="6.5" height="1.6" fill="#8fc08a" opacity="0.4"/><rect x="1413.5" y="175.6" width="6.9" height="1.6" fill="#8fc08a" opacity="0.4"/><rect x="1451.6" y="175.6" width="5.0" height="1.6" fill="#8fc08a" opacity="0.4"/><rect x="1495.2" y="175.6" width="4.5" height="1.6" fill="#8fc08a" opacity="0.4"/><rect x="1537.7" y="175.6" width="7.6" height="1.6" fill="#8fc08a" opacity="0.4"/><rect x="1582.7" y="175.6" width="4.9" height="1.6" fill="#8fc08a" opacity="0.4"/>
</g>
<polyline points="1598.0,202.3 1400.0,203.0 1240.0,204.2 1000.0,205.3 930.0,204.6 797.0,200.2 687.0,212.7 625.0,199.8 600.0,198.9 500.0,191.0 330.0,178.5 296.0,175.5" fill="none" stroke="#3f93a6" stroke-width="1.1" opacity="0.9"/>
<line x1="296" y1="173" x2="1598" y2="173" stroke="#5a8fc8" stroke-width="1.6"/>
<line x1="294.6" y1="131" x2="294.6" y2="793" stroke="#ef4444" stroke-opacity="0.92" stroke-width="3" stroke-dasharray="8 5.7"/>
<line x1="691.2" y1="130" x2="691.2" y2="793" stroke="#f1f5f9" stroke-opacity="0.95" stroke-width="2" stroke-dasharray="6 6.1"/>
<line x1="70" y1="238.2" x2="1599" y2="238.2" stroke="#fffff0" stroke-opacity="0.95" stroke-width="1.6" stroke-dasharray="6 6"/>
<g stroke="#e2e8f0" stroke-width="2" fill="none">
<rect x="70" y="130" width="1529" height="664"/>
</g>
<path d="M70.0 122V130M255.4 122V130M440.9 122V130M626.3 122V130M811.8 122V130M997.2 122V130M1182.7 122V130M1368.1 122V130M1553.6 122V130M70.0 794V801M222.0 794V801M445.0 794V801M651.0 794V801M753.0 794V801M854.0 794V801M1031.0 794V801M1285.0 794V801M1538.0 794V801M62 130.2H70M62 151.9H70M62 173.6H70M62 195.3H70M62 217.0H70M62 238.7H70M62 260.4H70M62 282.1H70M62 303.8H70M62 325.5H70M62 347.2H70M62 368.9H70M62 390.6H70M62 412.3H70M62 434.0H70M62 455.7H70M62 477.4H70M62 499.1H70M62 520.8H70M62 542.5H70M62 564.2H70M62 585.9H70M62 607.6H70M62 629.3H70M62 651.0H70M62 672.7H70M62 694.4H70M62 716.1H70M62 737.8H70M62 759.5H70M62 781.2H70M1599 173.6H1606.5M1599 195.3H1606.5M1599 217.0H1606.5M1599 238.7H1606.5M1599 260.4H1606.5M1599 282.1H1606.5M1599 303.8H1606.5M1599 325.5H1606.5M1599 347.2H1606.5M1599 368.9H1606.5M1599 390.6H1606.5M1599 412.3H1606.5M1599 434.0H1606.5M1599 455.7H1606.5M1599 477.4H1606.5M1599 499.1H1606.5M1599 520.8H1606.5M1599 542.5H1606.5M1599 564.2H1606.5M1599 585.9H1606.5M1599 607.6H1606.5M1599 629.3H1606.5M1599 651.0H1606.5M1599 672.7H1606.5M1599 694.4H1606.5M1599 716.1H1606.5M1599 737.8H1606.5M1599 759.5H1606.5M1599 781.2H1606.5" stroke="#e2e8f0" stroke-width="1.6" fill="none"/>
<rect x="676.8" y="104.8" width="27.8" height="19.4" fill="#0f172a" stroke="#dfe5ee" stroke-width="1.6"/>
<text x="690.7" y="121.8" text-anchor="middle" font-family="Liberation Sans, sans-serif" font-size="14.6" fill="#e2e8f0">6.7</text>
<rect x="674.7" y="795.0" width="32.2" height="18.7" fill="#0f172a" stroke="#dfe5ee" stroke-width="1.6"/>
<text x="690.8" y="811.3" text-anchor="middle" font-family="Liberation Sans, sans-serif" font-size="14.6" fill="#e2e8f0">677</text>
<rect x="32.8" y="225.2" width="32.4" height="19.7" fill="#0f172a" stroke="#dfe5ee" stroke-width="1.6"/>
<text x="49.0" y="242.2" text-anchor="middle" font-family="Liberation Sans, sans-serif" font-size="14.6" fill="#e2e8f0">-1.5</text>
<rect x="1602.5" y="225.5" width="25.6" height="19.0" fill="#0f172a" stroke="#dfe5ee" stroke-width="1.6"/>
<text x="1615.3" y="242.3" text-anchor="middle" font-family="Liberation Sans, sans-serif" font-size="14.6" fill="#e2e8f0">1.5</text>
<rect x="30" y="237" width="1.6" height="1.6" fill="#e2e8f0" opacity="0.7"/>
<path d="M1629.6 233.5v2 M1629.6 239.5q1.6 1 0 3" stroke="#e2e8f0" stroke-width="1.5" fill="none" opacity="0.8"/>
</svg>
<div class="t" style="left:788.7px;top:78.5px">Distance (m)</div>
<div class="t" style="left:807px;top:821.5px">Signals</div>
<div class="t" style="left:-35px;top:453px;width:94.2px;transform:rotate(-90deg);transform-origin:50% 50%">Elevation (m)</div>
<div class="t" style="left:1608.5px;top:453.5px;width:86px;font-size:15.6px;transform:rotate(90deg);transform-origin:50% 50%">Depth (m) →</div>
<div class="t" style="left:40.0px;top:105px;width:60px;text-align:center">0.0</div>
<div class="t" style="left:225.4px;top:105px;width:60px;text-align:center">2.0</div>
<div class="t" style="left:410.8px;top:105px;width:60px;text-align:center">4.0</div>
<div class="t" style="left:596.2px;top:105px;width:60px;text-align:center">6.0</div>
<div class="t" style="left:781.6px;top:105px;width:60px;text-align:center">8.0</div>
<div class="t" style="left:967.0px;top:105px;width:60px;text-align:center">10.0</div>
<div class="t" style="left:1152.4px;top:105px;width:60px;text-align:center">12.0</div>
<div class="t" style="left:1337.8px;top:105px;width:60px;text-align:center">14.0</div>
<div class="t" style="left:1523.2px;top:105px;width:60px;text-align:center">16.0</div>
<div class="t" style="left:39.5px;top:804px;width:60px;text-align:center">0</div>
<div class="t" style="left:192.0px;top:804px;width:60px;text-align:center">200</div>
<div class="t" style="left:415.0px;top:804px;width:60px;text-align:center">400</div>
<div class="t" style="left:621.0px;top:804px;width:60px;text-align:center">600</div>
<div class="t" style="left:723.0px;top:804px;width:60px;text-align:center">800</div>
<div class="t" style="left:824.0px;top:804px;width:60px;text-align:center">1000</div>
<div class="t" style="left:1001.0px;top:804px;width:60px;text-align:center">1200</div>
<div class="t" style="left:1255.0px;top:804px;width:60px;text-align:center">1400</div>
<div class="t" style="left:1508.0px;top:804px;width:60px;text-align:center">1600</div>
<div class="t" style="left:0;top:121.7px;width:56.5px;text-align:right">1.0</div>
<div class="t" style="left:0;top:143.4px;width:56.5px;text-align:right">0.5</div>
<div class="t" style="left:0;top:165.1px;width:56.5px;text-align:right">0.0</div>
<div class="t" style="left:0;top:186.8px;width:56.5px;text-align:right">-0.5</div>
<div class="t" style="left:0;top:208.5px;width:56.5px;text-align:right">-1.0</div>
<div class="t" style="left:0;top:251.9px;width:56.5px;text-align:right">-2.0</div>
<div class="t" style="left:0;top:273.6px;width:56.5px;text-align:right">-2.5</div>
<div class="t" style="left:0;top:295.3px;width:56.5px;text-align:right">-3.0</div>
<div class="t" style="left:0;top:317.0px;width:56.5px;text-align:right">-3.5</div>
<div class="t" style="left:0;top:338.7px;width:56.5px;text-align:right">-4.0</div>
<div class="t" style="left:0;top:360.4px;width:56.5px;text-align:right">-4.5</div>
<div class="t" style="left:0;top:382.1px;width:56.5px;text-align:right">-5.0</div>
<div class="t" style="left:0;top:403.8px;width:56.5px;text-align:right">-5.5</div>
<div class="t" style="left:0;top:425.5px;width:56.5px;text-align:right">-6.0</div>
<div class="t" style="left:0;top:447.2px;width:56.5px;text-align:right">-6.5</div>
<div class="t" style="left:0;top:468.9px;width:56.5px;text-align:right">-7.0</div>
<div class="t" style="left:0;top:490.6px;width:56.5px;text-align:right">-7.5</div>
<div class="t" style="left:0;top:512.3px;width:56.5px;text-align:right">-8.0</div>
<div class="t" style="left:0;top:534.0px;width:56.5px;text-align:right">-8.5</div>
<div class="t" style="left:0;top:555.7px;width:56.5px;text-align:right">-9.0</div>
<div class="t" style="left:0;top:577.4px;width:56.5px;text-align:right">-9.5</div>
<div class="t" style="left:0;top:599.1px;width:56.5px;text-align:right">-10.0</div>
<div class="t" style="left:0;top:620.8px;width:56.5px;text-align:right">-10.5</div>
<div class="t" style="left:0;top:642.5px;width:56.5px;text-align:right">-11.0</div>
<div class="t" style="left:0;top:664.2px;width:56.5px;text-align:right">-11.5</div>
<div class="t" style="left:0;top:685.9px;width:56.5px;text-align:right">-12.0</div>
<div class="t" style="left:0;top:707.6px;width:56.5px;text-align:right">-12.5</div>
<div class="t" style="left:0;top:729.3px;width:56.5px;text-align:right">-13.0</div>
<div class="t" style="left:0;top:751.0px;width:56.5px;text-align:right">-13.5</div>
<div class="t" style="left:0;top:772.7px;width:56.5px;text-align:right">-14.0</div>
<div class="t" style="left:1611px;top:165.1px">0.0</div>
<div class="t" style="left:1611px;top:186.8px">0.5</div>
<div class="t" style="left:1611px;top:208.5px">1.0</div>
<div class="t" style="left:1611px;top:251.9px">2.0</div>
<div class="t" style="left:1611px;top:273.6px">2.5</div>
<div class="t" style="left:1611px;top:295.3px">3.0</div>
<div class="t" style="left:1611px;top:317.0px">3.5</div>
<div class="t" style="left:1611px;top:338.7px">4.0</div>
<div class="t" style="left:1611px;top:360.4px">4.5</div>
<div class="t" style="left:1611px;top:382.1px">5.0</div>
<div class="t" style="left:1611px;top:403.8px">5.5</div>
<div class="t" style="left:1611px;top:425.5px">6.0</div>
<div class="t" style="left:1611px;top:447.2px">6.5</div>
<div class="t" style="left:1611px;top:468.9px">7.0</div>
<div class="t" style="left:1611px;top:490.6px">7.5</div>
<div class="t" style="left:1611px;top:512.3px">8.0</div>
<div class="t" style="left:1611px;top:534.0px">8.5</div>
<div class="t" style="left:1611px;top:555.7px">9.0</div>
<div class="t" style="left:1611px;top:577.4px">9.5</div>
<div class="t" style="left:1611px;top:599.1px">10.0</div>
<div class="t" style="left:1611px;top:620.8px">10.5</div>
<div class="t" style="left:1611px;top:642.5px">11.0</div>
<div class="t" style="left:1611px;top:664.2px">11.5</div>
<div class="t" style="left:1611px;top:685.9px">12.0</div>
<div class="t" style="left:1611px;top:707.6px">12.5</div>
<div class="t" style="left:1611px;top:729.3px">13.0</div>
<div class="t" style="left:1611px;top:751.0px">13.5</div>
<div class="t" style="left:1611px;top:772.7px">14.0</div>
<div class="a" style="left:284.2px;top:107.5px;font-family:'Liberation Mono',monospace;font-size:16.4px;line-height:18px;color:#ef4444">M1</div>
<div class="a" style="left:1666px;top:130px;width:22px;height:663px;border:1px solid #e2e8f0;background:linear-gradient(to bottom,#000080 0%,#0823a5 10%,#0f5fc8 19%,#0591d7 25%,#00beeb 30%,#00ffff 36.8%,#3cffbe 43.7%,#8cff64 51.3%,#dff72a 59%,#ffff00 62.4%,#ffd700 66.5%,#ffa500 71.5%,#ff5000 79%,#ff0000 87.5%,#c80000 94%,#8b0000 100%)"></div>
<div class="a" style="left:1690px;top:191.25px;width:4px;height:1.5px;background:#e2e8f0"></div>
<div class="a" style="left:1664px;top:184px;width:80px;height:16px;text-align:center;font-size:15px;line-height:16px;color:#e2e8f0;transform:rotate(-90deg)">15000</div>
<div class="a" style="left:1690px;top:302.25px;width:4px;height:1.5px;background:#e2e8f0"></div>
<div class="a" style="left:1664px;top:295px;width:80px;height:16px;text-align:center;font-size:15px;line-height:16px;color:#e2e8f0;transform:rotate(-90deg)">10000</div>
<div class="a" style="left:1690px;top:411.25px;width:4px;height:1.5px;background:#e2e8f0"></div>
<div class="a" style="left:1664px;top:404px;width:80px;height:16px;text-align:center;font-size:15px;line-height:16px;color:#e2e8f0;transform:rotate(-90deg)">5000</div>
<div class="a" style="left:1690px;top:520.25px;width:4px;height:1.5px;background:#e2e8f0"></div>
<div class="a" style="left:1664px;top:513px;width:80px;height:16px;text-align:center;font-size:15px;line-height:16px;color:#e2e8f0;transform:rotate(-90deg)">0</div>
<div class="a" style="left:1690px;top:631.25px;width:4px;height:1.5px;background:#e2e8f0"></div>
<div class="a" style="left:1664px;top:624px;width:80px;height:16px;text-align:center;font-size:15px;line-height:16px;color:#e2e8f0;transform:rotate(-90deg)">-5000</div>
<div class="a" style="left:1690px;top:741.25px;width:4px;height:1.5px;background:#e2e8f0"></div>
<div class="a" style="left:1664px;top:734px;width:80px;height:16px;text-align:center;font-size:15px;line-height:16px;color:#e2e8f0;transform:rotate(-90deg)">-10000</div>
<div class="hl" style="left:0;top:844px;width:1740px"></div>
<div class="a" style="left:1212px;top:842px;width:36px;height:6px;border-radius:3px;background:#334155"></div>
<div class="tab" style="left:30px;">Project</div>
<div class="tab" style="left:155px;">Attributes</div>
<div class="tab" style="left:299px;">Edit</div>
<div class="tab" style="left:400.5px;">Coordinates</div>
<div class="tab" style="left:564.5px;">Transform</div>
<div class="tab" style="left:713.5px;">Filters</div>
<div class="tab" style="left:831.5px;">Analysis</div>
<div class="tab" style="left:967px;">Modeling</div>
<div class="tab" style="left:1108.5px;color:#32b8e8;">Geomodel</div>
<div class="tab" style="left:1259.5px;">Plots</div>
<div class="tab" style="left:1369px;">Anomalies</div>
<div class="tab" style="left:1521px;">History</div>
<div class="hl" style="left:0;top:903px;width:1718px"></div>
<div class="hl" style="left:1730px;top:904px;width:10px"></div>
<div class="a" style="left:1072.5px;top:902.3px;width:150.5px;height:1.7px;background:#32b8e8"></div>
<div class="card" style="top:915px;height:215px"></div>
<div class="a" style="left:27px;top:933px;width:22px;height:22px;border-radius:4px;border:1px solid #4e5a6e;background:#394355"></div>
<div class="a" style="left:61px;top:933.5px;font-size:18.3px;line-height:21px;color:#e2e8f0">Background Layer (default)</div>
<div class="lab" style="top:985.0px">ε (permittivity)</div>
<div class="lab" style="top:1035.0px">v (m/ns)</div>
<div class="lab" style="top:1085.0px">α (dB/m)</div>
<div class="spin" style="top:975px"><i style="left:52px"></i><i style="left:111px"></i><svg width="14" height="14" viewBox="0 0 14 14" style="left:19px"><path d="M2 4.5 L7 9.5 L12 4.5" fill="none" stroke="#cbd5e1" stroke-width="2" stroke-linecap="round" stroke-linejoin="round"/></svg><b>9.0</b><svg width="14" height="14" viewBox="0 0 14 14" style="left:131px"><path d="M2 9.5 L7 4.5 L12 9.5" fill="none" stroke="#cbd5e1" stroke-width="2" stroke-linecap="round" stroke-linejoin="round"/></svg></div>
<div class="spin" style="top:1025px"><i style="left:52px"></i><i style="left:111px"></i><svg width="14" height="14" viewBox="0 0 14 14" style="left:19px"><path d="M2 4.5 L7 9.5 L12 4.5" fill="none" stroke="#cbd5e1" stroke-width="2" stroke-linecap="round" stroke-linejoin="round"/></svg><b>0.100</b><svg width="14" height="14" viewBox="0 0 14 14" style="left:131px"><path d="M2 9.5 L7 4.5 L12 9.5" fill="none" stroke="#cbd5e1" stroke-width="2" stroke-linecap="round" stroke-linejoin="round"/></svg></div>
<div class="spin" style="top:1075px"><i style="left:52px"></i><i style="left:111px"></i><svg width="14" height="14" viewBox="0 0 14 14" style="left:19px"><path d="M2 4.5 L7 9.5 L12 4.5" fill="none" stroke="#cbd5e1" stroke-width="2" stroke-linecap="round" stroke-linejoin="round"/></svg><b>—</b><svg width="14" height="14" viewBox="0 0 14 14" style="left:131px"><path d="M2 9.5 L7 4.5 L12 9.5" fill="none" stroke="#cbd5e1" stroke-width="2" stroke-linecap="round" stroke-linejoin="round"/></svg></div>
<div class="card" style="top:1153.4px;height:50.5px"></div>
<svg class="a" style="left:34px;top:1167px" width="16" height="24" viewBox="0 0 16 24"><path d="M3.2 3 L13 12 L3.2 21" fill="none" stroke="#e2e8f0" stroke-width="2.2" stroke-linecap="round" stroke-linejoin="round"/></svg>
<div class="sw" style="top:1167px;background:#1558a0"></div>
<div class="nm" style="top:1168.5px">Water</div>
<div class="poly" style="top:1168px">(1 polygons)</div>
<div class="card" style="top:1216.4px;height:50.5px"></div>
<svg class="a" style="left:34px;top:1230.8px" width="16" height="24" viewBox="0 0 16 24"><path d="M3.2 3 L13 12 L3.2 21" fill="none" stroke="#e2e8f0" stroke-width="2.2" stroke-linecap="round" stroke-linejoin="round"/></svg>
<div class="sw" style="top:1230.8px;background:#927020"></div>
<div class="nm" style="top:1232.3px">Sand</div>
<div class="poly" style="top:1231.8px">(1 polygons)</div>
<svg class="a" style="left:1705px;top:909px" width="11" height="7" viewBox="0 0 11 7"><path d="M0.5 6.5 L5.5 0.8 L10.5 6.5 Z" fill="#e2e8f0"/></svg>
<div class="a" style="left:1706px;top:983.5px;width:9.3px;height:281.5px;border-radius:4.6px;background:#e2e8f0"></div>
<svg class="a" style="left:1705px;top:1271px" width="11" height="7" viewBox="0 0 11 7"><path d="M0.5 0.5 L5.5 6.2 L10.5 0.5 Z" fill="#e2e8f0"/></svg>
</div></body></html>
